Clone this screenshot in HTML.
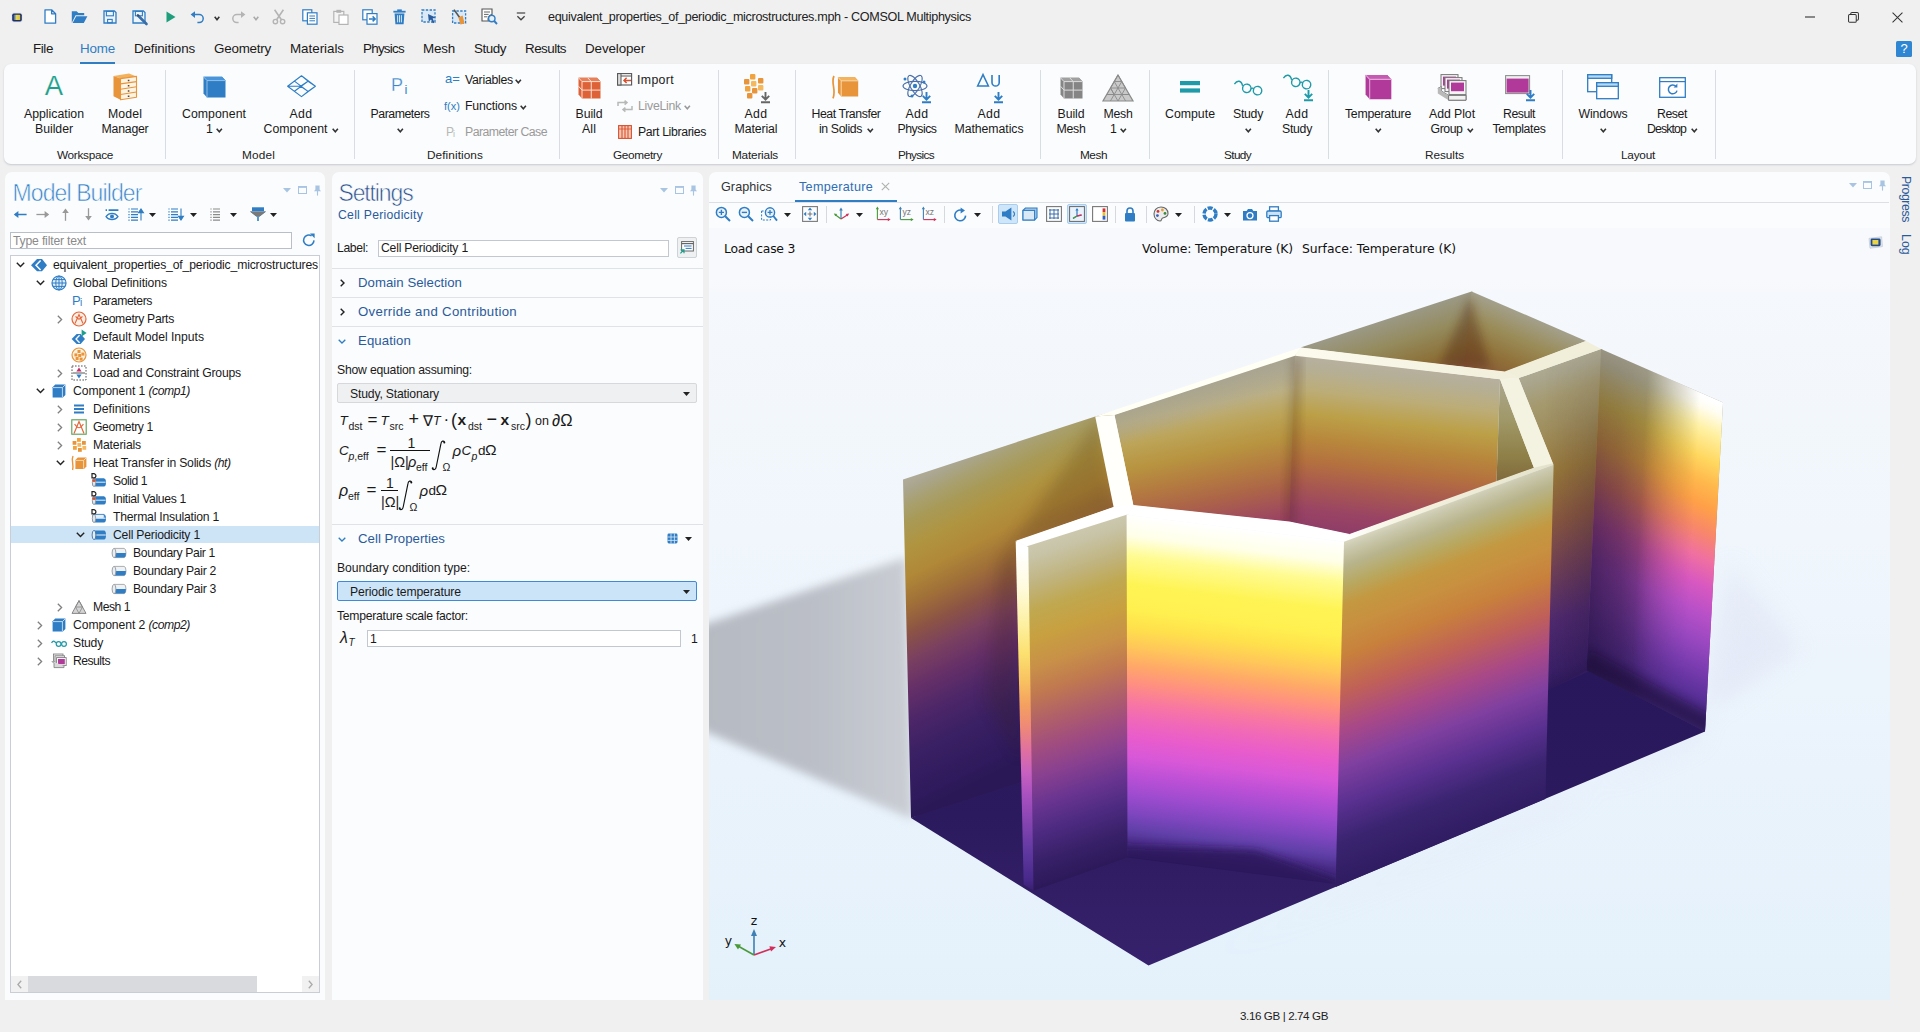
<!DOCTYPE html>
<html lang="en"><head><meta charset="utf-8"><title>COMSOL Multiphysics</title>
<style>
*{box-sizing:border-box;margin:0;padding:0}
html,body{width:1920px;height:1032px;overflow:hidden;background:#f0f0f0}
body{font-family:"Liberation Sans",sans-serif;font-size:12px;color:#1a1a1a;position:relative}
.abs{position:absolute}
.t{position:absolute;white-space:nowrap;line-height:16px;height:16px}
.c{transform:translateX(-50%);text-align:center}
svg{position:absolute;overflow:visible}
#ribbon{position:absolute;left:4px;top:64px;width:1912px;height:100px;background:#fafcfd;border-radius:7px;box-shadow:0 1px 2px rgba(120,130,150,.35)}
.sep{position:absolute;top:70px;width:1px;height:89px;background:#d9dde3}
.rl{font-size:12.3px;letter-spacing:-.1px}
.gl{font-size:11.8px;color:#222}
.menu{font-size:13.4px}
.panel{position:absolute;background:#fafcfd;border-radius:7px 7px 0 0}
.ptitle{font-size:23px;color:#3583c9;line-height:26px;height:26px;-webkit-text-stroke:.6px #fafcfd}
.tree{position:absolute;left:10px;top:255px;width:310px;height:738px;background:#fff;border:1px solid #c9ced6}
.tr{font-size:12.2px;letter-spacing:-.12px}
.sec{font-size:13.2px;color:#2b5a9b;letter-spacing:-.05px}
.hline{position:absolute;left:332px;width:371px;height:1px;background:#dfe3e8}
.lab{font-size:12.2px;letter-spacing:-.12px}
.inp{position:absolute;background:#fff;border:1px solid #c3c8d0}
.math{font-family:"Liberation Serif",serif;font-size:16px;color:#111}
.gtxt{font-family:"DejaVu Sans",sans-serif;font-size:12.4px;color:#111}
</style></head><body>
<svg style="left:11px;top:11.5px" width="12" height="11" viewBox="0 0 12 11"><defs><linearGradient id="apg" x1="0" y1="0" x2="1" y2="0"><stop offset="0" stop-color="#2d58b0"/><stop offset=".45" stop-color="#e6d85a"/><stop offset="1" stop-color="#d9c23a"/></linearGradient></defs><rect x=".4" y=".4" width="11.2" height="10.2" rx="2.4" fill="#dfe3ea"/><rect x="1.2" y="1.6" width="9.6" height="7.8" rx="1.6" fill="#1f2f66"/><rect x="2.6" y="2.8" width="6.6" height="5.2" rx=".6" fill="url(#apg)"/></svg>
<svg style="left:44px;top:9px" width="13" height="15" viewBox="0 0 13 15"><path d="M1 .8H7.6L11.6 4.8V14.2H1Z M7.6 .8V4.8H11.6" fill="#fff" stroke="#2f7dc4" stroke-width="1.3" stroke-linejoin="round"/></svg>
<svg style="left:71px;top:10px" width="17" height="14" viewBox="0 0 17 14"><path d="M.8 12.8V1.2H5.6L7.4 3H13.2V5.2H4.6L.8 12.8Z" fill="#2f7dc4"/><path d="M1.6 13L5.2 6.2H16.4L12.8 13Z" fill="#2f7dc4"/></svg>
<svg style="left:103px;top:10px" width="14" height="14" viewBox="0 0 14 14"><path d="M1 1H11.4L13 2.6V13H1Z" fill="#eef4fb" stroke="#2f7dc4" stroke-width="1.3"/><rect x="3.4" y="1.4" width="7" height="4.4" fill="none" stroke="#2f7dc4" stroke-width="1.1"/><rect x="4.6" y="9.4" width="4.6" height="3.4" fill="none" stroke="#2f7dc4" stroke-width="1.1"/></svg>
<svg style="left:132px;top:10px" width="16" height="15" viewBox="0 0 16 15"><path d="M1 1H11.4L13 2.6V13H1Z" fill="#eef4fb" stroke="#2f7dc4" stroke-width="1.3"/><rect x="3.4" y="1.4" width="7" height="4.4" fill="none" stroke="#2f7dc4" stroke-width="1.1"/><path d="M6 5.5L14.5 14" stroke="#3a6ea8" stroke-width="2.6" stroke-linecap="round"/><path d="M4.8 4.2L7.4 5.4L6 6.8Z" fill="#444"/></svg>
<svg style="left:166px;top:11px" width="10" height="12" viewBox="0 0 10 12"><path d="M.5 .5L9.5 6L.5 11.5Z" fill="#1f9e7c"/></svg>
<svg style="left:190px;top:10px" width="15" height="14" viewBox="0 0 15 14"><path d="M3 4.6H9.2A4 4 0 0 1 9.2 12.6H7.4" fill="none" stroke="#2f7dc4" stroke-width="1.5"/><path d="M.6 4.6L5 1.2V8Z" fill="#2f7dc4"/></svg>
<svg style="left:214.0px;top:16px" width="6" height="5" viewBox="0 0 6 5"><path d="M0.7 0.7 L3.0 3.8 L5.3 0.7" fill="none" stroke="#333" stroke-width="1.55"/></svg>
<svg style="left:231px;top:10px" width="15" height="14" viewBox="0 0 15 14"><path d="M12 4.6H5.8A4 4 0 0 0 5.8 12.6H7.6" fill="none" stroke="#b4b4b4" stroke-width="1.5"/><path d="M14.4 4.6L10 1.2V8Z" fill="#b4b4b4"/></svg>
<svg style="left:253.0px;top:16px" width="6" height="5" viewBox="0 0 6 5"><path d="M0.7 0.7 L3.0 3.8 L5.3 0.7" fill="none" stroke="#aaa" stroke-width="1.55"/></svg>
<svg style="left:272px;top:9px" width="14" height="16" viewBox="0 0 14 16"><path d="M2.6 .8L9.6 11 M11.4 .8L4.4 11" stroke="#b4b4b4" stroke-width="1.6" fill="none"/><circle cx="3.4" cy="12.6" r="2.2" fill="none" stroke="#b4b4b4" stroke-width="1.4"/><circle cx="10.6" cy="12.6" r="2.2" fill="none" stroke="#b4b4b4" stroke-width="1.4"/></svg>
<svg style="left:302px;top:9px" width="16" height="16" viewBox="0 0 16 16"><rect x=".8" y=".8" width="9" height="11" fill="#fff" stroke="#2f7dc4" stroke-width="1.2"/><rect x="5.4" y="3.8" width="9.6" height="11.4" fill="#fff" stroke="#2f7dc4" stroke-width="1.2"/><path d="M7.4 7H13M7.4 9.4H13M7.4 11.8H13" stroke="#2f7dc4" stroke-width="1"/></svg>
<svg style="left:333px;top:9px" width="16" height="16" viewBox="0 0 16 16"><rect x=".8" y="2.4" width="10" height="11" fill="#f4f4f4" stroke="#b4b4b4" stroke-width="1.2"/><rect x="3.4" y=".8" width="4.8" height="3" fill="#b4b4b4"/><rect x="6" y="6" width="9" height="9.4" fill="#fff" stroke="#b4b4b4" stroke-width="1.2"/></svg>
<svg style="left:362px;top:9px" width="16" height="16" viewBox="0 0 16 16"><rect x=".8" y=".8" width="9.4" height="10" fill="#fff" stroke="#2f7dc4" stroke-width="1.2"/><rect x="5" y="4.6" width="10" height="10.6" fill="#fff" stroke="#2f7dc4" stroke-width="1.2"/><path d="M7 9.9H13M10.6 7.4L13.2 9.9L10.6 12.4" stroke="#2f7dc4" stroke-width="1.5" fill="none"/></svg>
<svg style="left:393px;top:9px" width="13" height="16" viewBox="0 0 13 16"><path d="M1.6 4.4H11.4L10.6 15.2H2.4Z" fill="#2f7dc4"/><rect x=".4" y="1.8" width="12.2" height="1.8" fill="#2f7dc4"/><rect x="4.2" y=".4" width="4.6" height="1.6" fill="#2f7dc4"/><path d="M4.6 6.2V13.4M6.5 6.2V13.4M8.4 6.2V13.4" stroke="#e9f1fa" stroke-width=".9"/></svg>
<svg style="left:421px;top:9px" width="17" height="16" viewBox="0 0 17 16"><rect x="1" y="1" width="13" height="12" fill="#dbe9f7" stroke="#2f7dc4" stroke-width="1.3" stroke-dasharray="2.4 1.4"/><path d="M7 5L14.6 8.4L11.6 9.6L13.6 13.4L12 14.2L10 10.4L7.8 12.6Z" fill="#2a5d9e"/></svg>
<svg style="left:451px;top:9px" width="17" height="16" viewBox="0 0 17 16"><rect x="1.6" y="2" width="13" height="12" fill="#dbe9f7" stroke="#2f7dc4" stroke-width="1.3" stroke-dasharray="2.4 1.4"/><path d="M3 .6L9 9" stroke="#555" stroke-width="1.6"/><path d="M7.4 8.4L11.6 6.6L13.6 14.6L9.4 15.4Z" fill="#e8953a"/></svg>
<svg style="left:481px;top:8px" width="17" height="18" viewBox="0 0 17 18"><path d="M1 1H11V6.6A4.6 4.6 0 0 0 7.4 13H1Z" fill="#fff" stroke="#555" stroke-width="1.1"/><path d="M3 4H9M3 6.4H7.6M3 8.8H6.4" stroke="#666" stroke-width="1"/><circle cx="10.8" cy="10.6" r="3.2" fill="#e6f0fb" stroke="#2f7dc4" stroke-width="1.4"/><path d="M13.2 13L16 16" stroke="#2f7dc4" stroke-width="1.9"/></svg>
<svg style="left:516px;top:12px" width="10" height="10" viewBox="0 0 10 10"><path d="M.8 1H9.2" stroke="#444" stroke-width="1.2"/><path d="M1.4 4.2L5 7.8L8.6 4.2" fill="none" stroke="#444" stroke-width="1.3"/></svg>
<div id="t1" class="t " style="left:548px;top:9px;letter-spacing:-0.327px;font-size:12.6px;color:#222;">equivalent_properties_of_periodic_microstructures.mph - COMSOL Multiphysics</div>
<svg style="left:1805px;top:16px" width="10" height="2" viewBox="0 0 10 2"><path d="M0 1H10" stroke="#333" stroke-width="1.1"/></svg>
<svg style="left:1848px;top:11.5px" width="11" height="11" viewBox="0 0 12 12"><rect x=".6" y="2.8" width="8.4" height="8.4" rx="1.2" fill="none" stroke="#333" stroke-width="1.1"/><path d="M3 2.8V2A1.4 1.4 0 0 1 4.4 .6H10A1.4 1.4 0 0 1 11.4 2V7.6A1.4 1.4 0 0 1 10 9H9" fill="none" stroke="#333" stroke-width="1.1"/></svg>
<svg style="left:1892px;top:11.5px" width="11" height="11" viewBox="0 0 12 12"><path d="M.6 .6L11.4 11.4M11.4 .6L.6 11.4" stroke="#333" stroke-width="1.1"/></svg>
<div class="abs" style="left:1896px;top:41px;width:16px;height:16px;background:#2f86d2;border-radius:1.5px"></div><div class="t c" style="left:1904px;top:41px;color:#fff;font-size:13px;line-height:16px">?</div>
<div id="t2" class="t menu" style="left:33px;top:41px;letter-spacing:-0.395px;">File</div>
<div id="t3" class="t menu" style="left:80px;top:41px;letter-spacing:-0.184px;color:#2f7dc4;">Home</div>
<div id="t4" class="t menu" style="left:134px;top:41px;letter-spacing:-0.139px;">Definitions</div>
<div id="t5" class="t menu" style="left:214px;top:41px;letter-spacing:-0.225px;">Geometry</div>
<div id="t6" class="t menu" style="left:290px;top:41px;letter-spacing:-0.036px;">Materials</div>
<div id="t7" class="t menu" style="left:363px;top:41px;letter-spacing:-0.734px;">Physics</div>
<div id="t8" class="t menu" style="left:423px;top:41px;letter-spacing:-0.188px;">Mesh</div>
<div id="t9" class="t menu" style="left:474px;top:41px;letter-spacing:-0.450px;">Study</div>
<div id="t10" class="t menu" style="left:525px;top:41px;letter-spacing:-0.522px;">Results</div>
<div id="t11" class="t menu" style="left:585px;top:41px;letter-spacing:-0.116px;">Developer</div>
<div class="abs" style="left:80px;top:62px;width:35px;height:2px;background:#2f7dc4"></div>
<div id="ribbon"></div>
<div class="sep" style="left:165px"></div>
<div class="sep" style="left:354px"></div>
<div class="sep" style="left:559px"></div>
<div class="sep" style="left:718px"></div>
<div class="sep" style="left:795px"></div>
<div class="sep" style="left:1040px"></div>
<div class="sep" style="left:1149px"></div>
<div class="sep" style="left:1328px"></div>
<div class="sep" style="left:1562px"></div>
<div class="sep" style="left:1715px"></div>
<div id="t12" class="t c " style="left:54px;top:79px;font-size:27.5px;line-height:30px;height:30px;top:70.6px;color:#1fa08c;-webkit-text-stroke:.2px #fafcfd;">A</div>
<div id="t13" class="t c rl" style="left:54px;top:106px;letter-spacing:-0.015px;">Application</div>
<div id="t14" class="t c rl" style="left:54px;top:121px;letter-spacing:-0.040px;">Builder</div>
<svg style="left:112.5px;top:73.0px" width="24" height="28" viewBox="0 0 24 28"><path d="M.5 3L16 .6L23.5 3.4L7.5 5.6Z" fill="#f3b25c"/><path d="M.5 3L7.5 5.6V26.8L.5 23.2Z" fill="#e8943a"/><path d="M7.5 5.6L23.5 3.4V24.2L7.5 26.8Z" fill="#fdf4e4" stroke="#e8943a" stroke-width="1.1" stroke-linejoin="round"/><path d="M7.5 10.9L23.5 8.6M7.5 16.2L23.5 13.8M7.5 21.5L23.5 19" stroke="#e8943a" stroke-width="1.1"/><path d="M14.8 7.5h1.6M14.8 12.8h1.6M14.8 18h1.6M14.8 23.2h1.6" stroke="#5a4630" stroke-width="1.5"/></svg>
<div id="t15" class="t c rl" style="left:125px;top:106px;letter-spacing:0.100px;">Model</div>
<div id="t16" class="t c rl" style="left:125px;top:121px;letter-spacing:-0.221px;">Manager</div>
<svg style="left:202.5px;top:75.5px" width="23" height="22" viewBox="0 0 23 22"><path d="M.5 .8H19L22.5 4.6V21.6H4L.5 17.6Z" fill="#2f7dc4"/><path d="M.5 .8H19L22.5 4.6H4Z" fill="#4a94da"/><path d="M.5 .8L4 4.6V21.6M4 4.6H22.5" fill="none" stroke="#9cc6ee" stroke-width=".9"/></svg>
<div id="t17" class="t c rl" style="left:214px;top:106px;letter-spacing:0.046px;">Component</div>
<div id="t18" class="t rl" style="left:206.0px;top:121px;">1</div>
<svg style="left:215.5px;top:127.6px" width="6.6" height="5" viewBox="0 0 6.6 5"><path d="M0.7 0.7 L3.3 3.8 L5.8999999999999995 0.7" fill="none" stroke="#333" stroke-width="1.55"/></svg>
<svg style="left:286.5px;top:75.3px" width="29" height="22.4" viewBox="0 0 29 22.4"><path d="M14.5 .8L.6 11.2L14.5 21.6L28.4 11.2Z M14.5 .8L21 6.2M14.5 21.6L21 16.4M.6 11.2L13.6 11.2 M21 6.2L13.6 11.2L21 16.4L28.4 11.2Z M7.4 6.1L21 16.4M7.4 16.3L21 6.2" fill="none" stroke="#2f7dc4" stroke-width="1.1" stroke-linejoin="round"/></svg>
<div id="t19" class="t c rl" style="left:301px;top:106px;letter-spacing:0.369px;">Add</div>
<div id="t20" class="t rl" style="left:263.5px;top:121px;letter-spacing:0.046px;">Component</div>
<svg style="left:332.0px;top:127.6px" width="6.6" height="5" viewBox="0 0 6.6 5"><path d="M0.7 0.7 L3.3 3.8 L5.8999999999999995 0.7" fill="none" stroke="#333" stroke-width="1.55"/></svg>
<div id="t21" class="t c " style="left:397px;top:78px;font-size:18px;line-height:20px;height:20px;top:74.6px;color:#3a87cc;-webkit-text-stroke:.3px #fafcfd;">P</div>
<div id="t22" class="t c " style="left:406px;top:82px;font-size:13px;line-height:14px;height:14px;top:82.6px;color:#3a87cc;">i</div>
<div id="t23" class="t c rl" style="left:400px;top:106px;letter-spacing:-0.456px;">Parameters</div>
<svg style="left:396.7px;top:127.6px" width="6.6" height="5" viewBox="0 0 6.6 5"><path d="M0.7 0.7 L3.3 3.8 L5.8999999999999995 0.7" fill="none" stroke="#333" stroke-width="1.55"/></svg>
<div id="t24" class="t " style="left:445px;top:71px;font-size:13px;color:#2f7dc4;font-weight:400">a=</div>
<div id="t25" class="t rl" style="left:465px;top:72px;letter-spacing:-0.261px;">Variables</div>
<svg style="left:514.7px;top:78.6px" width="6.6" height="5" viewBox="0 0 6.6 5"><path d="M0.7 0.7 L3.3 3.8 L5.8999999999999995 0.7" fill="none" stroke="#333" stroke-width="1.55"/></svg>
<div id="t26" class="t " style="left:444px;top:97.5px;font-size:11px;color:#2f7dc4;">f(x)</div>
<div id="t27" class="t rl" style="left:465px;top:98px;letter-spacing:-0.147px;">Functions</div>
<svg style="left:519.7px;top:104.6px" width="6.6" height="5" viewBox="0 0 6.6 5"><path d="M0.7 0.7 L3.3 3.8 L5.8999999999999995 0.7" fill="none" stroke="#333" stroke-width="1.55"/></svg>
<div id="t28" class="t " style="left:446px;top:124px;font-size:12px;color:#b8b8b8;">P</div>
<div id="t29" class="t " style="left:453px;top:126px;font-size:9px;color:#b8b8b8;">i</div>
<div id="t30" class="t rl" style="left:465px;top:124px;letter-spacing:-0.539px;color:#9a9a9a;">Parameter Case</div>
<svg style="left:577.5px;top:76.5px" width="23" height="22" viewBox="0 0 23 22"><path d="M.5 .8H19L22.5 4.6V21.6H4L.5 17.6Z" fill="#dd6238"/><path d="M.5 .8H19L22.5 4.6H4Z" fill="#e8805a"/><path d="M.5 .8L4 4.6V21.6M4 4.6H22.5M13.25 4.6V21.6M4 13.1H22.5M9.75 .8L13.25 4.6M.5 9.2L4 13.1" fill="none" stroke="#fbe0d4" stroke-width="1"/></svg>
<div id="t31" class="t c rl" style="left:589px;top:106px;letter-spacing:-0.072px;">Build</div>
<div id="t32" class="t c rl" style="left:589px;top:121px;letter-spacing:0.108px;">All</div>
<svg style="left:617px;top:73px" width="16" height="13" viewBox="0 0 16 13"><rect x=".6" y=".6" width="14" height="11.4" fill="#fff" stroke="#555" stroke-width="1.1"/><path d="M.6 3H14.6" stroke="#555" stroke-width="1"/><path d="M14 7.4H7M9.6 4.8L7 7.4L9.6 10" stroke="#d9502f" stroke-width="1.5" fill="none"/><rect x=".6" y=".6" width="3.4" height="11.4" fill="#ddd" stroke="#555" stroke-width="1"/></svg>
<div id="t33" class="t rl" style="left:637px;top:72px;letter-spacing:0.358px;">Import</div>
<svg style="left:617px;top:100px" width="16" height="12" viewBox="0 0 16 12"><path d="M1 6V2.6H10M7.6 .6L10 2.6L7.6 4.6M15 6V9.6H6M8.4 7.6L6 9.6L8.4 11.6" fill="none" stroke="#b8b8b8" stroke-width="1.5"/></svg>
<div id="t34" class="t rl" style="left:638px;top:98px;letter-spacing:-0.266px;color:#9a9a9a;">LiveLink</div>
<svg style="left:683.7px;top:104.6px" width="6.6" height="5" viewBox="0 0 6.6 5"><path d="M0.7 0.7 L3.3 3.8 L5.8999999999999995 0.7" fill="none" stroke="#999" stroke-width="1.55"/></svg>
<svg style="left:618px;top:125px" width="14" height="14" viewBox="0 0 14 14"><rect x=".6" y=".6" width="12.8" height="12.8" fill="#f7c9b5" stroke="#d9502f" stroke-width="1.1"/><path d="M4 1V13M7 1V13M10 1V13" stroke="#d9502f" stroke-width="1.1"/><path d="M1 4H13" stroke="#d9502f" stroke-width=".8"/></svg>
<div id="t35" class="t rl" style="left:638px;top:124px;letter-spacing:-0.367px;">Part Libraries</div>
<svg style="left:743.0px;top:74.0px" width="28" height="30" viewBox="0 0 28 30"><rect x="7" y="0" width="5.4" height="5.4" rx="1" fill="#f0a33f"/><rect x="1" y="5" width="5.4" height="5.4" rx="1" fill="#e8943a"/><rect x="8" y="7" width="5.4" height="5.4" rx="1" fill="#f5b85c"/><rect x="15" y="4" width="5.4" height="5.4" rx="1" fill="#e8943a"/><rect x="2" y="12" width="5.4" height="5.4" rx="1" fill="#f0a33f"/><rect x="9" y="14" width="5.4" height="5.4" rx="1" fill="#e8943a"/><rect x="15" y="11" width="5.4" height="5.4" rx="1" fill="#f5b85c"/><rect x="4" y="19" width="5.4" height="5.4" rx="1" fill="#e8943a"/><path d="M22.5 18V25M18.8 21.8L22.5 25.6L26.2 21.8M18 28.2H27" fill="none" stroke="#666" stroke-width="1.9"/></svg>
<div id="t36" class="t c rl" style="left:756px;top:106px;letter-spacing:0.369px;">Add</div>
<div id="t37" class="t c rl" style="left:756px;top:121px;letter-spacing:-0.092px;">Material</div>
<svg style="left:831.0px;top:74.5px" width="28" height="24" viewBox="0 0 28 24"><path d="M3 1C-.5 8 5.5 14 2 23.4" fill="none" stroke="#e8943a" stroke-width="1.7"/><g transform="translate(6.5,1.6) scale(.92)"><path d="M.5 .8H19L22.5 4.6V21.6H4L.5 17.6Z" fill="#e8943a"/><path d="M.5 .8H19L22.5 4.6H4Z" fill="#f3b25c"/><path d="M.5 .8L4 4.6V21.6M4 4.6H22.5" fill="none" stroke="#fbe0b8" stroke-width="1"/></g></svg>
<div id="t38" class="t c rl" style="left:846px;top:106px;letter-spacing:-0.423px;">Heat Transfer</div>
<div id="t39" class="t rl" style="left:819.0px;top:121px;letter-spacing:-0.388px;">in Solids</div>
<svg style="left:866.5px;top:127.6px" width="6.6" height="5" viewBox="0 0 6.6 5"><path d="M0.7 0.7 L3.3 3.8 L5.8999999999999995 0.7" fill="none" stroke="#333" stroke-width="1.55"/></svg>
<svg style="left:902.0px;top:72.0px" width="30" height="32" viewBox="0 0 30 32"><g fill="none" stroke="#4a6fa8" stroke-width="1.1"><ellipse cx="13" cy="14" rx="12" ry="4.6"/><ellipse cx="13" cy="14" rx="12" ry="4.6" transform="rotate(60 13 14)"/><ellipse cx="13" cy="14" rx="12" ry="4.6" transform="rotate(120 13 14)"/></g><circle cx="13" cy="14" r="2.2" fill="#2f7dc4"/><circle cx="3" cy="7" r="1.5" fill="#2f7dc4"/><circle cx="22" cy="10" r="1.5" fill="#2f7dc4"/><circle cx="10" cy="24" r="1.5" fill="#2f7dc4"/><path d="M24.5 20V27M20.8 23.8L24.5 27.6L28.2 23.8M20 30.2H29" fill="none" stroke="#2f7dc4" stroke-width="1.9"/></svg>
<div id="t40" class="t c rl" style="left:917px;top:106px;letter-spacing:0.369px;">Add</div>
<div id="t41" class="t c rl" style="left:917px;top:121px;letter-spacing:-0.482px;">Physics</div>
<svg style="left:976.0px;top:73.0px" width="28" height="30" viewBox="0 0 28 30"><path d="M1.6 13L7 1.6L12.4 13Z" fill="none" stroke="#2f7dc4" stroke-width="1.5"/><path d="M16 2V9.4A3.6 3.6 0 0 0 23.2 9.4V2" fill="none" stroke="#2f7dc4" stroke-width="1.6"/><path d="M22.5 19V26M18.8 22.8L22.5 26.6L26.2 22.8M18 29.2H27" fill="none" stroke="#2f7dc4" stroke-width="1.9"/></svg>
<div id="t42" class="t c rl" style="left:989px;top:106px;letter-spacing:0.369px;">Add</div>
<div id="t43" class="t c rl" style="left:989px;top:121px;letter-spacing:-0.064px;">Mathematics</div>
<svg style="left:1059.5px;top:76.5px" width="23" height="22" viewBox="0 0 23 22"><path d="M.5 .8H19L22.5 4.6V21.6H4L.5 17.6Z" fill="#858585"/><path d="M.5 .8H19L22.5 4.6H4Z" fill="#a0a0a0"/><path d="M.5 .8L4 4.6V21.6M4 4.6H22.5M13.25 4.6V21.6M4 13.1H22.5M9.75 .8L13.25 4.6M.5 9.2L4 13.1" fill="none" stroke="#dcdcdc" stroke-width="1"/></svg>
<div id="t44" class="t c rl" style="left:1071px;top:106px;letter-spacing:-0.072px;">Build</div>
<div id="t45" class="t c rl" style="left:1071px;top:121px;letter-spacing:-0.268px;">Mesh</div>
<svg style="left:1102.0px;top:74.0px" width="32" height="28" viewBox="0 0 32 28"><path d="M16 1L31 27H1Z" fill="#c9c9c9" stroke="#8a8a8a" stroke-width="1.2"/><path d="M8.5 14H23.5M4.8 20.5H27.2M12.2 7.5H19.8M16 1L8.5 14L12.2 20.5L4.8 20.5M16 1L23.5 14L19.8 20.5L27.2 20.5M12.2 7.5L19.8 20.5L16 27L12.2 20.5L19.8 7.5M8.5 14L12.2 20.5M8.4 27L12.2 20.5M23.6 27L19.8 20.5" fill="none" stroke="#8a8a8a" stroke-width=".9"/></svg>
<div id="t46" class="t c rl" style="left:1118px;top:106px;letter-spacing:-0.268px;">Mesh</div>
<div id="t47" class="t rl" style="left:1110.0px;top:121px;">1</div>
<svg style="left:1119.5px;top:127.6px" width="6.6" height="5" viewBox="0 0 6.6 5"><path d="M0.7 0.7 L3.3 3.8 L5.8999999999999995 0.7" fill="none" stroke="#333" stroke-width="1.55"/></svg>
<svg style="left:1180.0px;top:81.0px" width="20" height="12" viewBox="0 0 20 12"><rect x="0" y="0" width="20" height="4.2" fill="#1f9aa8"/><rect x="0" y="7.4" width="20" height="4.2" fill="#1f9aa8"/></svg>
<div id="t48" class="t c rl" style="left:1190px;top:106px;letter-spacing:0.014px;">Compute</div>
<svg style="left:1233.0px;top:80.5px" width="30" height="13" viewBox="0 0 30 13"><g transform="rotate(12 15 6.5)"><path d="M1 6C3 1 7 1 9.4 6" fill="none" stroke="#1f9aa8" stroke-width="1.4"/><circle cx="14" cy="7.6" r="4.2" fill="none" stroke="#1f9aa8" stroke-width="1.4"/><circle cx="25" cy="7.6" r="4.2" fill="none" stroke="#1f9aa8" stroke-width="1.4"/><path d="M18.2 7C19.4 5.8 20 5.8 20.8 7" fill="none" stroke="#1f9aa8" stroke-width="1.3"/></g></svg>
<div id="t49" class="t c rl" style="left:1248px;top:106px;letter-spacing:-0.291px;">Study</div>
<svg style="left:1244.7px;top:127.6px" width="6.6" height="5" viewBox="0 0 6.6 5"><path d="M0.7 0.7 L3.3 3.8 L5.8999999999999995 0.7" fill="none" stroke="#333" stroke-width="1.55"/></svg>
<svg style="left:1282px;top:75px" width="32" height="28" viewBox="0 0 32 28"><g transform="rotate(12 15 6.5)"><path d="M1 6C3 1 7 1 9.4 6" fill="none" stroke="#1f9aa8" stroke-width="1.4"/><circle cx="14" cy="7.6" r="4.2" fill="none" stroke="#1f9aa8" stroke-width="1.4"/><circle cx="25" cy="7.6" r="4.2" fill="none" stroke="#1f9aa8" stroke-width="1.4"/><path d="M18.2 7C19.4 5.8 20 5.8 20.8 7" fill="none" stroke="#1f9aa8" stroke-width="1.3"/></g><path d="M26.5 15V22M22.8 18.8L26.5 22.6L30.2 18.8M22 25.2H31" fill="none" stroke="#1f9aa8" stroke-width="1.9"/></svg>
<div id="t50" class="t c rl" style="left:1297px;top:106px;letter-spacing:0.369px;">Add</div>
<div id="t51" class="t c rl" style="left:1297px;top:121px;letter-spacing:-0.291px;">Study</div>
<svg style="left:1364.5px;top:74.3px" width="27" height="25.4" viewBox="0 0 27 25.4"><g transform="scale(1.17)"><path d="M.5 .8H19L22.5 4.6V21.6H4L.5 17.6Z" fill="#b0399a"/><path d="M.5 .8H19L22.5 4.6H4Z" fill="#c659b2"/><path d="M.5 .8L4 4.6V21.6M4 4.6H22.5" fill="none" stroke="#e3a6d8" stroke-width=".9"/></g></svg>
<div id="t52" class="t c rl" style="left:1378px;top:106px;letter-spacing:-0.276px;">Temperature</div>
<svg style="left:1374.7px;top:127.6px" width="6.6" height="5" viewBox="0 0 6.6 5"><path d="M0.7 0.7 L3.3 3.8 L5.8999999999999995 0.7" fill="none" stroke="#333" stroke-width="1.55"/></svg>
<svg style="left:1437.0px;top:73.5px" width="30" height="27" viewBox="0 0 30 27"><rect x="4" y=".6" width="17" height="14" fill="#f4f4f4" stroke="#777" stroke-width="1"/><rect x="6" y="2.6" width="13" height="9" fill="#b0399a"/><rect x="8" y="3.6" width="17" height="14" fill="#f4f4f4" stroke="#777" stroke-width="1"/><rect x="10" y="5.6" width="13" height="9" fill="#b0399a"/><rect x="12" y="6.6" width="17" height="14" fill="#f4f4f4" stroke="#777" stroke-width="1"/><rect x="14" y="8.6" width="13" height="8.6" fill="#b0399a"/><path d="M.8 14.4L4.4 12.6V17L11.6 21.4V26.2H29V21" fill="none" stroke="#777" stroke-width="1"/><path d="M.8 14.4L4.4 12.6V17L11.6 21.4V26.2L.8 19.4Z" fill="#b9b9b9"/><path d="M11.6 21.4H29V26.2H11.6Z" fill="#f2f2f2" stroke="#777" stroke-width="1"/></svg>
<div id="t53" class="t c rl" style="left:1452px;top:106px;letter-spacing:-0.061px;">Add Plot</div>
<div id="t54" class="t rl" style="left:1430.5px;top:121px;letter-spacing:-0.438px;">Group</div>
<svg style="left:1467.0px;top:127.6px" width="6.6" height="5" viewBox="0 0 6.6 5"><path d="M0.7 0.7 L3.3 3.8 L5.8999999999999995 0.7" fill="none" stroke="#333" stroke-width="1.55"/></svg>
<svg style="left:1505.0px;top:75.0px" width="30" height="26" viewBox="0 0 30 26"><rect x=".6" y=".6" width="24" height="18" fill="#eee" stroke="#888" stroke-width="1"/><rect x="1.6" y="3.6" width="22" height="14" fill="#b0399a"/><path d="M25.5 15V22M21.8 18.8L25.5 22.6L29.2 18.8M21 25.2H30" fill="none" stroke="#2f7dc4" stroke-width="1.9"/></svg>
<div id="t55" class="t c rl" style="left:1519px;top:106px;letter-spacing:-0.478px;">Result</div>
<div id="t56" class="t c rl" style="left:1519px;top:121px;letter-spacing:-0.340px;">Templates</div>
<svg style="left:1587.0px;top:74.0px" width="32" height="26" viewBox="0 0 32 26"><rect x=".7" y=".7" width="24" height="17" fill="#fff" stroke="#2f7dc4" stroke-width="1.3"/><rect x=".7" y=".7" width="24" height="3.6" fill="#b5daf6" stroke="#2f7dc4" stroke-width="1.3"/><rect x="9.7" y="8.7" width="21.6" height="16" fill="#fff" stroke="#2f7dc4" stroke-width="1.3"/><rect x="9.7" y="8.7" width="21.6" height="3.6" fill="#b5daf6" stroke="#2f7dc4" stroke-width="1.3"/></svg>
<div id="t57" class="t c rl" style="left:1603px;top:106px;letter-spacing:-0.127px;">Windows</div>
<svg style="left:1599.7px;top:127.6px" width="6.6" height="5" viewBox="0 0 6.6 5"><path d="M0.7 0.7 L3.3 3.8 L5.8999999999999995 0.7" fill="none" stroke="#333" stroke-width="1.55"/></svg>
<svg style="left:1658.5px;top:76.5px" width="27" height="21" viewBox="0 0 27 21"><rect x=".7" y=".7" width="25.6" height="19.6" fill="#fff" stroke="#2f7dc4" stroke-width="1.3"/><path d="M.7 4.6H26.3" stroke="#2f7dc4" stroke-width="1.2"/><path d="M17 9.4A4.4 4.4 0 1 0 18 13.6" fill="none" stroke="#2f7dc4" stroke-width="1.5"/><path d="M18.4 6.6V10.4H14.6Z" fill="#2f7dc4"/></svg>
<div id="t58" class="t c rl" style="left:1672px;top:106px;letter-spacing:-0.425px;">Reset</div>
<div id="t59" class="t rl" style="left:1647.0px;top:121px;letter-spacing:-0.875px;">Desktop</div>
<svg style="left:1690.5px;top:127.6px" width="6.6" height="5" viewBox="0 0 6.6 5"><path d="M0.7 0.7 L3.3 3.8 L5.8999999999999995 0.7" fill="none" stroke="#333" stroke-width="1.55"/></svg>
<div id="t60" class="t gl" style="left:57px;top:147px;letter-spacing:-0.311px;">Workspace</div>
<div id="t61" class="t gl" style="left:242px;top:147px;letter-spacing:0.172px;">Model</div>
<div id="t62" class="t gl" style="left:427px;top:147px;letter-spacing:0.082px;">Definitions</div>
<div id="t63" class="t gl" style="left:613px;top:147px;letter-spacing:-0.350px;">Geometry</div>
<div id="t64" class="t gl" style="left:732px;top:147px;letter-spacing:-0.207px;">Materials</div>
<div id="t65" class="t gl" style="left:898px;top:147px;letter-spacing:-0.665px;">Physics</div>
<div id="t66" class="t gl" style="left:1080px;top:147px;letter-spacing:-0.465px;">Mesh</div>
<div id="t67" class="t gl" style="left:1224px;top:147px;letter-spacing:-0.634px;">Study</div>
<div id="t68" class="t gl" style="left:1425px;top:147px;letter-spacing:-0.049px;">Results</div>
<div id="t69" class="t gl" style="left:1621px;top:147px;letter-spacing:-0.237px;">Layout</div>
<div class="panel" style="left:5px;top:172px;width:320px;height:828px"></div>
<div id="t70" class="t ptitle" style="left:12.5px;top:183px;letter-spacing:-0.895px;top:179.5px;">Model Builder</div>
<svg style="left:283px;top:188px" width="8" height="5" viewBox="0 0 8 5"><path d="M0 0H8L4 4.6Z" fill="#a9c4e2"/></svg>
<svg style="left:297.5px;top:186px" width="9" height="8" viewBox="0 0 9 8"><rect x=".5" y=".5" width="8" height="7" fill="none" stroke="#a9c4e2" stroke-width="1"/><path d="M.5 1.2H8.5" stroke="#a9c4e2" stroke-width="1.4"/></svg>
<svg style="left:313.5px;top:185px" width="7" height="11" viewBox="0 0 7 11"><path d="M1.4 .4H5.6V4.6L7 6.2H0L1.4 4.6Z" fill="#a9c4e2"/><path d="M3.5 6V10.6" stroke="#a9c4e2" stroke-width="1.1"/></svg>
<svg style="left:13px;top:210.0px" width="14" height="9" viewBox="0 0 14 9"><path d="M13.6 4.5H2" stroke="#2f7dc4" stroke-width="1.5"/><path d="M5.4 1L.8 4.5L5.4 8Z" fill="#2f7dc4"/></svg>
<svg style="left:36px;top:210.0px" width="14" height="9" viewBox="0 0 14 9"><path d="M.4 4.5H12" stroke="#999" stroke-width="1.3"/><path d="M8.6 1L13.2 4.5L8.6 8Z" fill="#999"/></svg>
<svg style="left:61px;top:208.0px" width="9" height="13" viewBox="0 0 9 13"><path d="M4.5 12.8V2" stroke="#999" stroke-width="1.3"/><path d="M1.2 5L4.5 .4L7.8 5Z" fill="#999"/></svg>
<svg style="left:84px;top:208.0px" width="9" height="13" viewBox="0 0 9 13"><path d="M4.5 .2V11" stroke="#999" stroke-width="1.3"/><path d="M1.2 8L4.5 12.6L7.8 8Z" fill="#999"/></svg>
<svg style="left:104.5px;top:208.5px" width="14" height="12" viewBox="0 0 14 12"><path d="M.6 1.2H2M3.6 1.2H13.4" stroke="#2f7dc4" stroke-width="1.7"/><path d="M1 7.6C4 3.4 10 3.4 13 7.6C10 11.6 4 11.6 1 7.6Z" fill="none" stroke="#2f7dc4" stroke-width="1.2"/><circle cx="7" cy="7.6" r="2" fill="#2f7dc4"/></svg>
<svg style="left:128px;top:208.0px" width="16" height="13" viewBox="0 0 16 13"><path d="M.4 1H1.6M3 1H10" stroke="#2f7dc4" stroke-width="1.2"/><path d="M.4 3.8H1.6M3 3.8H10" stroke="#2f7dc4" stroke-width="1.2"/><path d="M.4 6.6H1.6M3 6.6H10" stroke="#2f7dc4" stroke-width="1.2"/><path d="M.4 9.4H1.6M3 9.4H10" stroke="#2f7dc4" stroke-width="1.2"/><path d="M.4 12.2H1.6M3 12.2H10" stroke="#2f7dc4" stroke-width="1.2"/><path d="M13 12.6V3M10.6 4.6L13 1L15.4 4.6Z" fill="#2f7dc4" stroke="#2f7dc4" stroke-width="1.1"/></svg>
<svg style="left:149.0px;top:213.0px" width="7" height="4" viewBox="0 0 7 4"><path d="M0 0H7L3.5 4Z" fill="#222"/></svg>
<svg style="left:168px;top:208.0px" width="16" height="13" viewBox="0 0 16 13"><path d="M.4 1H1.6M3 1H10" stroke="#2f7dc4" stroke-width="1.2"/><path d="M.4 3.8H1.6M3 3.8H10" stroke="#2f7dc4" stroke-width="1.2"/><path d="M.4 6.6H1.6M3 6.6H10" stroke="#2f7dc4" stroke-width="1.2"/><path d="M.4 9.4H1.6M3 9.4H10" stroke="#2f7dc4" stroke-width="1.2"/><path d="M.4 12.2H1.6M3 12.2H10" stroke="#2f7dc4" stroke-width="1.2"/><path d="M13 .4V10M10.6 8.4L13 12L15.4 8.4Z" fill="#2f7dc4" stroke="#2f7dc4" stroke-width="1.1"/></svg>
<svg style="left:190.0px;top:213.0px" width="7" height="4" viewBox="0 0 7 4"><path d="M0 0H7L3.5 4Z" fill="#222"/></svg>
<svg style="left:210px;top:208.0px" width="12" height="13" viewBox="0 0 12 13"><path d="M.4 1H1.6M3 1H10" stroke="#8a8a8a" stroke-width="1.2"/><path d="M.4 3.8H1.6M3 3.8H10" stroke="#8a8a8a" stroke-width="1.2"/><path d="M.4 6.6H1.6M3 6.6H10" stroke="#8a8a8a" stroke-width="1.2"/><path d="M.4 9.4H1.6M3 9.4H10" stroke="#8a8a8a" stroke-width="1.2"/><path d="M.4 12.2H1.6M3 12.2H10" stroke="#8a8a8a" stroke-width="1.2"/></svg>
<svg style="left:230.0px;top:213.0px" width="7" height="4" viewBox="0 0 7 4"><path d="M0 0H7L3.5 4Z" fill="#222"/></svg>
<svg style="left:249px;top:207.0px" width="18" height="15" viewBox="0 0 18 15"><path d="M3 .6H15V4H3Z M1 4.4H17L10.6 9.6H7.4Z" fill="#2f7dc4"/><path d="M1 4.4H17L10.6 9.6H7.4Z" fill="#7a7a7a"/><path d="M3 .6H15V4H3Z" fill="#2f7dc4"/><path d="M9 9.4V14" stroke="#2f7dc4" stroke-width="1.6"/></svg>
<svg style="left:269.5px;top:213.0px" width="7" height="4" viewBox="0 0 7 4"><path d="M0 0H7L3.5 4Z" fill="#222"/></svg>
<div class="inp" style="left:10px;top:232px;width:282px;height:17px;border-color:#b9bfc8"></div>
<div id="t71" class="t tr" style="left:13px;top:232.5px;letter-spacing:-0.180px;color:#8a8a8a;">Type filter text</div>
<svg style="left:302px;top:233px" width="14" height="14" viewBox="0 0 14 14"><path d="M12 7.4A5.2 5.2 0 1 1 9.6 2.8" fill="none" stroke="#2f7dc4" stroke-width="1.5"/><path d="M8 .6H12.6V5.2Z" fill="#2f7dc4"/></svg>
<div class="tree"></div>
<svg style="left:15.5px;top:262px" width="9" height="6" viewBox="0 0 9 6"><path d="M.8 .8L4.5 4.6L8.2 .8" fill="none" stroke="#222" stroke-width="1.4"/></svg>
<svg style="left:31px;top:257px" width="16" height="16" viewBox="0 0 16 16"><path d="M0 8.2L6 2H11L16 8.2L11 14.2H6Z" fill="#2f7dc4"/><path d="M9.6 3.4L5 8.2L9.6 13" fill="none" stroke="#fff" stroke-width="1.5"/></svg>
<div id="t72" class="t tr" style="left:53px;top:257px;letter-spacing:-0.164px;">equivalent_properties_of_periodic_microstructures</div>
<svg style="left:35.5px;top:280px" width="9" height="6" viewBox="0 0 9 6"><path d="M.8 .8L4.5 4.6L8.2 .8" fill="none" stroke="#222" stroke-width="1.4"/></svg>
<svg style="left:51px;top:275px" width="16" height="16" viewBox="0 0 16 16"><circle cx="8" cy="8" r="7" fill="#e3effa" stroke="#2f7dc4" stroke-width="1.2"/><ellipse cx="8" cy="8" rx="3.2" ry="7" fill="none" stroke="#2f7dc4" stroke-width="1"/><path d="M1 8H15M2 4.6H14M2 11.4H14M8 1V15" stroke="#2f7dc4" stroke-width="1"/></svg>
<div id="t73" class="t tr" style="left:73px;top:275px;letter-spacing:-0.084px;">Global Definitions</div>
<div id="t74" class="t " style="left:72px;top:293px;font-size:13px;color:#2f7dc4;">P</div><div id="t75" class="t " style="left:80px;top:295px;font-size:10px;color:#2f7dc4;">i</div>
<div id="t76" class="t tr" style="left:93px;top:293px;letter-spacing:-0.400px;">Parameters</div>
<svg style="left:56.8px;top:314.5px" width="6" height="9" viewBox="0 0 6 9"><path d="M.8 .8L4.6 4.5L.8 8.2" fill="none" stroke="#808080" stroke-width="1.3"/></svg>
<svg style="left:71px;top:311px" width="16" height="16" viewBox="0 0 16 16"><circle cx="8" cy="8" r="7" fill="#fdeee6" stroke="#e2673b" stroke-width="1.2"/><path d="M4 12.4L8 3.6L12 12.4M4.6 5.4C7 9 9 9 11.4 5.4" fill="none" stroke="#e2673b" stroke-width="1.1"/></svg>
<div id="t77" class="t tr" style="left:93px;top:311px;letter-spacing:-0.311px;">Geometry Parts</div>
<svg style="left:71px;top:329px" width="16" height="16" viewBox="0 0 16 16"><path d="M.6 10L5.6 5H9.6L14 10L9.6 15H5.6Z" fill="#2f7dc4"/><path d="M8.6 6.2L5 10L8.6 13.8" fill="none" stroke="#fff" stroke-width="1.3"/><path d="M10.6 .6L15.6 4L10.6 7.4Z" fill="#1f9e8c"/></svg>
<div id="t78" class="t tr" style="left:93px;top:329px;letter-spacing:-0.040px;">Default Model Inputs</div>
<svg style="left:71px;top:347px" width="16" height="16" viewBox="0 0 16 16"><circle cx="8" cy="8" r="7" fill="#fdf1df" stroke="#e8943a" stroke-width="1.2"/><rect x="6.5" y="3" width="3" height="3" fill="#e8943a"/><rect x="3.4" y="6.4" width="3" height="3" fill="#e8943a"/><rect x="7.2" y="7" width="3" height="3" fill="#e8943a"/><rect x="10.4" y="5.6" width="3" height="3" fill="#e8943a"/><rect x="4.6" y="10" width="3" height="3" fill="#e8943a"/><rect x="8.6" y="10.6" width="3" height="3" fill="#e8943a"/></svg>
<div id="t79" class="t tr" style="left:93px;top:347px;letter-spacing:-0.162px;">Materials</div>
<svg style="left:56.8px;top:368.5px" width="6" height="9" viewBox="0 0 6 9"><path d="M.8 .8L4.6 4.5L.8 8.2" fill="none" stroke="#808080" stroke-width="1.3"/></svg>
<svg style="left:71px;top:365px" width="16" height="16" viewBox="0 0 16 16"><rect x="1" y="1" width="14" height="14" fill="none" stroke="#555" stroke-width="1" stroke-dasharray="1.6 1.4"/><path d="M8 2.6L10.6 6.6H5.4Z" fill="#c2306a"/><path d="M8 13.4L5.4 9.4H10.6Z" fill="#2f7dc4"/><path d="M2 8H14" stroke="#555" stroke-width="1"/></svg>
<div id="t80" class="t tr" style="left:93px;top:365px;letter-spacing:-0.197px;">Load and Constraint Groups</div>
<svg style="left:35.5px;top:388px" width="9" height="6" viewBox="0 0 9 6"><path d="M.8 .8L4.5 4.6L8.2 .8" fill="none" stroke="#222" stroke-width="1.4"/></svg>
<svg style="left:51px;top:383px" width="16" height="16" viewBox="0 0 16 16"><path d="M1.6 4.2L4.2 1.6H14.4V12L11.8 14.6H1.6Z" fill="#2f7dc4"/><path d="M2 4.6H11.4V14.2M11.4 4.6L14 2" fill="none" stroke="#cfe3f6" stroke-width=".9"/></svg>
<div id="t81" class="t tr" style="left:73px;top:383px;letter-spacing:-0.085px;">Component 1 <i style="letter-spacing:-.5px">(comp1)</i></div>
<svg style="left:56.8px;top:404.5px" width="6" height="9" viewBox="0 0 6 9"><path d="M.8 .8L4.6 4.5L.8 8.2" fill="none" stroke="#808080" stroke-width="1.3"/></svg>
<svg style="left:71px;top:401px" width="16" height="16" viewBox="0 0 16 16"><path d="M3 4.4H13M3 8H13M3 11.6H13" stroke="#2f7dc4" stroke-width="2"/></svg>
<div id="t82" class="t tr" style="left:93px;top:401px;letter-spacing:0.008px;">Definitions</div>
<svg style="left:56.8px;top:422.5px" width="6" height="9" viewBox="0 0 6 9"><path d="M.8 .8L4.6 4.5L.8 8.2" fill="none" stroke="#808080" stroke-width="1.3"/></svg>
<svg style="left:71px;top:419px" width="16" height="16" viewBox="0 0 16 16"><rect x=".8" y=".8" width="14.4" height="14.4" fill="#fff" stroke="#5aa050" stroke-width="1.1"/><path d="M3 14.6L8 2.6L13 14.6M3.6 5C7 10 9 10 12.4 5" fill="none" stroke="#e2673b" stroke-width="1.2"/></svg>
<div id="t83" class="t tr" style="left:93px;top:419px;letter-spacing:-0.368px;">Geometry 1</div>
<svg style="left:56.8px;top:440.5px" width="6" height="9" viewBox="0 0 6 9"><path d="M.8 .8L4.6 4.5L.8 8.2" fill="none" stroke="#808080" stroke-width="1.3"/></svg>
<svg style="left:71px;top:437px" width="16" height="16" viewBox="0 0 16 16"><rect x="6" y="1" width="3.8" height="3.8" fill="#f0a33f"/><rect x="1.6" y="4" width="3.8" height="3.8" fill="#e8943a"/><rect x="6.4" y="6" width="3.8" height="3.8" fill="#f5b85c"/><rect x="11" y="4" width="3.8" height="3.8" fill="#e8943a"/><rect x="2" y="9" width="3.8" height="3.8" fill="#f0a33f"/><rect x="7" y="11" width="3.8" height="3.8" fill="#e8943a"/><rect x="11.4" y="9" width="3.8" height="3.8" fill="#f5b85c"/></svg>
<div id="t84" class="t tr" style="left:93px;top:437px;letter-spacing:-0.162px;">Materials</div>
<svg style="left:55.5px;top:460px" width="9" height="6" viewBox="0 0 9 6"><path d="M.8 .8L4.5 4.6L8.2 .8" fill="none" stroke="#222" stroke-width="1.4"/></svg>
<svg style="left:71px;top:455px" width="16" height="16" viewBox="0 0 16 16"><path d="M2 1C0 5 3 9 1.6 15" fill="none" stroke="#e8943a" stroke-width="1.4"/><path d="M4.4 5L6.8 2.6H15.4V11.6L13 14H4.4Z" fill="#e8943a"/><path d="M4.8 5.4H12.6V13.6M12.6 5.4L15 3" fill="none" stroke="#fbe0b8" stroke-width=".9"/></svg>
<div id="t85" class="t tr" style="left:93px;top:455px;letter-spacing:-0.230px;">Heat Transfer in Solids <i style="letter-spacing:-.5px">(ht)</i></div>
<svg style="left:91px;top:473px" width="16" height="16" viewBox="0 0 16 16"><path d="M3 5.4H13A2 4 0 0 1 13 13.4H3A2 4 0 0 1 3 5.4Z" fill="#2f7dc4"/><path d="M3 5.4H13A2 4 0 0 1 13 9.4H1.4A2 4 0 0 1 3 5.4Z" fill="#2f7dc4" stroke="#2f7dc4" stroke-width="0"/><path d="M1.2 9.2H14.6" stroke="#fff" stroke-width=".9"/><ellipse cx="3" cy="9.4" rx="1.7" ry="4" fill="#dfe7ef" stroke="#888" stroke-width=".7"/><path d="M1 .7H2.8A2.1 2.1 0 0 1 2.8 4.9H1Z" fill="#fff" stroke="#222" stroke-width="1.2"/><circle cx="3" cy="7.6" r="1.5" fill="#d9502f"/></svg>
<div id="t86" class="t tr" style="left:113px;top:473px;letter-spacing:-0.468px;">Solid 1</div>
<svg style="left:91px;top:491px" width="16" height="16" viewBox="0 0 16 16"><path d="M3 5.4H13A2 4 0 0 1 13 13.4H3A2 4 0 0 1 3 5.4Z" fill="#2f7dc4"/><path d="M3 5.4H13A2 4 0 0 1 13 9.4H1.4A2 4 0 0 1 3 5.4Z" fill="#2f7dc4" stroke="#2f7dc4" stroke-width="0"/><path d="M1.2 9.2H14.6" stroke="#fff" stroke-width=".9"/><ellipse cx="3" cy="9.4" rx="1.7" ry="4" fill="#dfe7ef" stroke="#888" stroke-width=".7"/><path d="M1 .7H2.8A2.1 2.1 0 0 1 2.8 4.9H1Z" fill="#fff" stroke="#222" stroke-width="1.2"/><circle cx="3" cy="7.6" r="1.5" fill="#d9502f"/></svg>
<div id="t87" class="t tr" style="left:113px;top:491px;letter-spacing:-0.336px;">Initial Values 1</div>
<svg style="left:91px;top:509px" width="16" height="16" viewBox="0 0 16 16"><path d="M3 5.4H13A2 4 0 0 1 13 13.4H3A2 4 0 0 1 3 5.4Z" fill="#2f7dc4"/><path d="M3 5.4H13A2 4 0 0 1 13 9.4H1.4A2 4 0 0 1 3 5.4Z" fill="#e8eef5" stroke="#2f7dc4" stroke-width="0.8"/><path d="M1.2 9.2H14.6" stroke="#fff" stroke-width=".9"/><ellipse cx="3" cy="9.4" rx="1.7" ry="4" fill="#dfe7ef" stroke="#888" stroke-width=".7"/><path d="M1 .7H2.8A2.1 2.1 0 0 1 2.8 4.9H1Z" fill="#fff" stroke="#222" stroke-width="1.2"/></svg>
<div id="t88" class="t tr" style="left:113px;top:509px;letter-spacing:-0.222px;">Thermal Insulation 1</div>
<div class="abs" style="left:11px;top:526px;width:308px;height:17px;background:#cde4f7"></div>
<svg style="left:75.5px;top:532px" width="9" height="6" viewBox="0 0 9 6"><path d="M.8 .8L4.5 4.6L8.2 .8" fill="none" stroke="#222" stroke-width="1.4"/></svg>
<svg style="left:91px;top:527px" width="16" height="16" viewBox="0 0 16 16"><path d="M3 3.4H13A2 4.6 0 0 1 13 12.6H3Z" fill="#2f7dc4"/><path d="M2 8H14.8" stroke="#fff" stroke-width=".9"/><ellipse cx="3" cy="8" rx="1.9" ry="4.6" fill="#e6eef7" stroke="#3b6ea5" stroke-width=".9"/></svg>
<div id="t89" class="t tr" style="left:113px;top:527px;letter-spacing:-0.209px;">Cell Periodicity 1</div>
<svg style="left:111px;top:545px" width="16" height="16" viewBox="0 0 16 16"><path d="M3 3.4H13A2 4.6 0 0 1 13 12.6H3Z" fill="#eef2f6" stroke="#999" stroke-width=".8"/><path d="M3 8H14.9A2 4.6 0 0 1 13 12.6H3Z" fill="#2f7dc4"/><ellipse cx="3" cy="8" rx="1.9" ry="4.6" fill="#e6eef7" stroke="#999" stroke-width=".9"/></svg>
<div id="t90" class="t tr" style="left:133px;top:545px;letter-spacing:-0.361px;">Boundary Pair 1</div>
<svg style="left:111px;top:563px" width="16" height="16" viewBox="0 0 16 16"><path d="M3 3.4H13A2 4.6 0 0 1 13 12.6H3Z" fill="#eef2f6" stroke="#999" stroke-width=".8"/><path d="M3 8H14.9A2 4.6 0 0 1 13 12.6H3Z" fill="#2f7dc4"/><ellipse cx="3" cy="8" rx="1.9" ry="4.6" fill="#e6eef7" stroke="#999" stroke-width=".9"/></svg>
<div id="t91" class="t tr" style="left:133px;top:563px;letter-spacing:-0.294px;">Boundary Pair 2</div>
<svg style="left:111px;top:581px" width="16" height="16" viewBox="0 0 16 16"><path d="M3 3.4H13A2 4.6 0 0 1 13 12.6H3Z" fill="#eef2f6" stroke="#999" stroke-width=".8"/><path d="M3 8H14.9A2 4.6 0 0 1 13 12.6H3Z" fill="#2f7dc4"/><ellipse cx="3" cy="8" rx="1.9" ry="4.6" fill="#e6eef7" stroke="#999" stroke-width=".9"/></svg>
<div id="t92" class="t tr" style="left:133px;top:581px;letter-spacing:-0.294px;">Boundary Pair 3</div>
<svg style="left:56.8px;top:602.5px" width="6" height="9" viewBox="0 0 6 9"><path d="M.8 .8L4.6 4.5L.8 8.2" fill="none" stroke="#808080" stroke-width="1.3"/></svg>
<svg style="left:71px;top:599px" width="16" height="16" viewBox="0 0 16 16"><path d="M8 1.6L15 14.4H1Z" fill="#d4d4d4" stroke="#888" stroke-width="1"/><path d="M4.5 8H11.5M8 1.6L4.5 8L8 14.4L11.5 8Z" fill="none" stroke="#888" stroke-width=".8"/></svg>
<div id="t93" class="t tr" style="left:93px;top:599px;letter-spacing:-0.495px;">Mesh 1</div>
<svg style="left:36.8px;top:620.5px" width="6" height="9" viewBox="0 0 6 9"><path d="M.8 .8L4.6 4.5L.8 8.2" fill="none" stroke="#808080" stroke-width="1.3"/></svg>
<svg style="left:51px;top:617px" width="16" height="16" viewBox="0 0 16 16"><path d="M1.6 4.2L4.2 1.6H14.4V12L11.8 14.6H1.6Z" fill="#2f7dc4"/><path d="M2 4.6H11.4V14.2M11.4 4.6L14 2" fill="none" stroke="#cfe3f6" stroke-width=".9"/></svg>
<div id="t94" class="t tr" style="left:73px;top:617px;letter-spacing:-0.085px;">Component 2 <i style="letter-spacing:-.5px">(comp2)</i></div>
<svg style="left:36.8px;top:638.5px" width="6" height="9" viewBox="0 0 6 9"><path d="M.8 .8L4.6 4.5L.8 8.2" fill="none" stroke="#808080" stroke-width="1.3"/></svg>
<svg style="left:51px;top:635px" width="16" height="16" viewBox="0 0 16 16"><path d="M.6 8C1.6 5.4 3.6 5.4 4.8 8" fill="none" stroke="#1f9aa8" stroke-width="1.2"/><circle cx="7.6" cy="9" r="2.4" fill="none" stroke="#1f9aa8" stroke-width="1.2"/><circle cx="13" cy="9" r="2.4" fill="none" stroke="#1f9aa8" stroke-width="1.2"/></svg>
<div id="t95" class="t tr" style="left:73px;top:635px;letter-spacing:-0.236px;">Study</div>
<svg style="left:36.8px;top:656.5px" width="6" height="9" viewBox="0 0 6 9"><path d="M.8 .8L4.6 4.5L.8 8.2" fill="none" stroke="#808080" stroke-width="1.3"/></svg>
<svg style="left:51px;top:653px" width="16" height="16" viewBox="0 0 16 16"><rect x="2.4" y="1" width="9.6" height="8" fill="#eee" stroke="#777" stroke-width=".8"/><rect x="4" y="2.8" width="9.6" height="8" fill="#eee" stroke="#777" stroke-width=".8"/><rect x="5.6" y="4.6" width="9.6" height="8" fill="#f6f6f6" stroke="#777" stroke-width=".8"/><rect x="7" y="6" width="6.8" height="5.2" fill="#b0399a"/><path d="M.8 8L3 10.6V14.6H13V13" fill="#d9d9d9" stroke="#777" stroke-width=".8"/></svg>
<div id="t96" class="t tr" style="left:73px;top:653px;letter-spacing:-0.522px;">Results</div>
<div class="abs" style="left:11px;top:976px;width:308px;height:16px;background:#f1f1f1"></div>
<div class="abs" style="left:28px;top:976px;width:229px;height:16px;background:#d8dadd"></div>
<div class="abs" style="left:257px;top:976px;width:45px;height:16px;background:#fff"></div>
<svg style="left:16.5px;top:979.5px" width="5" height="9" viewBox="0 0 5 9"><path d="M4.2 .8L.9 4.5L4.2 8.2" fill="none" stroke="#aaa" stroke-width="1.3"/></svg>
<svg style="left:308px;top:979.5px" width="5" height="9" viewBox="0 0 5 9"><path d="M.8 .8L4.1 4.5L.8 8.2" fill="none" stroke="#aaa" stroke-width="1.3"/></svg>
<div class="panel" style="left:332px;top:172px;width:371px;height:828px"></div>
<div id="t97" class="t ptitle" style="left:338.5px;top:183.9px;letter-spacing:-1.139px;top:179.5px;color:#2a508c;">Settings</div>
<svg style="left:660px;top:188px" width="8" height="5" viewBox="0 0 8 5"><path d="M0 0H8L4 4.6Z" fill="#a9c4e2"/></svg>
<svg style="left:674.5px;top:186px" width="9" height="8" viewBox="0 0 9 8"><rect x=".5" y=".5" width="8" height="7" fill="none" stroke="#a9c4e2" stroke-width="1"/><path d="M.5 1.2H8.5" stroke="#a9c4e2" stroke-width="1.4"/></svg>
<svg style="left:689.5px;top:185px" width="7" height="11" viewBox="0 0 7 11"><path d="M1.4 .4H5.6V4.6L7 6.2H0L1.4 4.6Z" fill="#a9c4e2"/><path d="M3.5 6V10.6" stroke="#a9c4e2" stroke-width="1.1"/></svg>
<div id="t98" class="t lab" style="left:338px;top:206.9px;letter-spacing:0.275px;color:#2b5a9b;">Cell Periodicity</div>
<div id="t99" class="t lab" style="left:337px;top:239.9px;letter-spacing:-0.370px;">Label:</div>
<div class="inp" style="left:378px;top:239.6px;width:291px;height:17px"></div>
<div id="t100" class="t lab" style="left:381px;top:239.9px;letter-spacing:-0.209px;">Cell Periodicity 1</div>
<div class="abs" style="left:677px;top:237px;width:20px;height:21px;background:#eef0f2;border:1px solid #cfd2d6;border-radius:2px"></div>
<svg style="left:680px;top:241px" width="14" height="13" viewBox="0 0 14 13"><rect x="1.6" y=".6" width="11.8" height="9.4" fill="#fff" stroke="#666" stroke-width="1"/><path d="M1.6 2.6H13.4" stroke="#666" stroke-width="1.2"/><path d="M4 5H11.6M5.6 7.4H11.6" stroke="#2f7dc4" stroke-width="1"/><path d="M.4 12.4L4 8.8M.6 8.8H4V12.2" fill="none" stroke="#1f9e8c" stroke-width="1.2"/></svg>
<div class="hline" style="top:268px"></div>
<div class="hline" style="top:297px"></div>
<div class="hline" style="top:326px"></div>
<div class="hline" style="top:524px"></div>
<svg style="left:339.5px;top:278.5px" width="5" height="8" viewBox="0 0 5 8"><path d="M.7 .7L4 4L.7 7.3" fill="none" stroke="#222" stroke-width="1.4"/></svg>
<div id="t101" class="t sec" style="left:358px;top:274.9px;letter-spacing:0.040px;">Domain Selection</div>
<svg style="left:339.5px;top:307.5px" width="5" height="8" viewBox="0 0 5 8"><path d="M.7 .7L4 4L.7 7.3" fill="none" stroke="#222" stroke-width="1.4"/></svg>
<div id="t102" class="t sec" style="left:358px;top:303.9px;letter-spacing:0.319px;">Override and Contribution</div>
<svg style="left:338px;top:338.5px" width="8" height="5" viewBox="0 0 8 5"><path d="M.7 .7L4 4L7.3 .7" fill="none" stroke="#2f7dc4" stroke-width="1.3"/></svg>
<div id="t103" class="t sec" style="left:358px;top:332.9px;letter-spacing:0.116px;">Equation</div>
<svg style="left:338px;top:536.5px" width="8" height="5" viewBox="0 0 8 5"><path d="M.7 .7L4 4L7.3 .7" fill="none" stroke="#2f7dc4" stroke-width="1.3"/></svg>
<div id="t104" class="t sec" style="left:358px;top:530.9px;letter-spacing:0.033px;">Cell Properties</div>
<div id="t105" class="t lab" style="left:337px;top:361.9px;letter-spacing:-0.199px;">Show equation assuming:</div>
<div class="abs" style="left:337px;top:383px;width:360px;height:20px;background:#eff0f1;border:1px solid #d6d8db;border-radius:2px"></div>
<div id="t106" class="t lab" style="left:350px;top:385.9px;letter-spacing:-0.171px;">Study, Stationary</div>
<svg style="left:682.5px;top:392px" width="7" height="4" viewBox="0 0 7 4"><path d="M0 0H7L3.5 4Z" fill="#222"/></svg>
<div class="t" style="left:339.5px;top:412.0px;height:18px;line-height:18px;font-size:13.5px;font-family:"Liberation Sans",sans-serif;color:#111;"><i>T</i></div>
<div class="t" style="left:348.5px;top:418.6px;height:14px;line-height:14px;font-size:10.5px;font-family:"Liberation Sans",sans-serif;color:#111;">dst</div>
<div class="t" style="left:367.5px;top:408.8px;height:22px;line-height:22px;font-size:17px;font-family:"Liberation Serif",serif;color:#111;">=</div>
<div class="t" style="left:380.5px;top:412.0px;height:18px;line-height:18px;font-size:13.5px;font-family:"Liberation Sans",sans-serif;color:#111;"><i>T</i></div>
<div class="t" style="left:389.5px;top:418.6px;height:14px;line-height:14px;font-size:10.5px;font-family:"Liberation Sans",sans-serif;color:#111;">src</div>
<div class="t" style="left:408.5px;top:407.9px;height:23px;line-height:23px;font-size:18px;font-family:"Liberation Serif",serif;color:#111;">+</div>
<div class="t" style="left:422.5px;top:410.5px;height:20px;line-height:20px;font-size:15px;font-family:"DejaVu Serif","Liberation Serif",serif;color:#111;">&nabla;</div>
<div class="t" style="left:433px;top:413.4px;height:16px;line-height:16px;font-size:12.5px;font-family:"Liberation Sans",sans-serif;color:#111;"><i>T</i></div>
<div class="t" style="left:443.5px;top:408.8px;height:22px;line-height:22px;font-size:17px;font-family:"Liberation Serif",serif;color:#111;">&middot;</div>
<div class="t" style="left:451px;top:408.9px;height:23px;line-height:23px;font-size:18px;font-family:"Liberation Serif",serif;color:#111;">(</div>
<div class="t" style="left:457.5px;top:410.3px;height:20px;line-height:20px;font-size:15.5px;font-family:"Liberation Sans",sans-serif;color:#111;"><b>x</b></div>
<div class="t" style="left:468px;top:418.6px;height:14px;line-height:14px;font-size:10.5px;font-family:"Liberation Sans",sans-serif;color:#111;">dst</div>
<div class="t" style="left:486.5px;top:407.9px;height:23px;line-height:23px;font-size:18px;font-family:"Liberation Serif",serif;color:#111;">&minus;</div>
<div class="t" style="left:500.5px;top:410.3px;height:20px;line-height:20px;font-size:15.5px;font-family:"Liberation Sans",sans-serif;color:#111;"><b>x</b></div>
<div class="t" style="left:511px;top:418.6px;height:14px;line-height:14px;font-size:10.5px;font-family:"Liberation Sans",sans-serif;color:#111;">src</div>
<div class="t" style="left:525.5px;top:408.9px;height:23px;line-height:23px;font-size:18px;font-family:"Liberation Serif",serif;color:#111;">)</div>
<div class="t" style="left:535px;top:413.4px;height:16px;line-height:16px;font-size:12.5px;font-family:"Liberation Sans",sans-serif;color:#111;">on</div>
<div class="t" style="left:552px;top:409.5px;height:21px;line-height:21px;font-size:16.5px;font-family:"Liberation Serif",serif;color:#111;">&part;&Omega;</div>
<div class="t" style="left:339px;top:442.0px;height:18px;line-height:18px;font-size:13.5px;font-family:"Liberation Sans",sans-serif;color:#111;"><i>C</i></div>
<div class="t" style="left:348.5px;top:449.1px;height:14px;line-height:14px;font-size:10.5px;font-family:"Liberation Sans",sans-serif;color:#111;"><i>p</i>,eff</div>
<div class="t" style="left:376.5px;top:438.8px;height:22px;line-height:22px;font-size:17px;font-family:"Liberation Serif",serif;color:#111;">=</div>
<div class="t" style="left:407.5px;top:434.4px;height:18px;line-height:18px;font-size:14px;font-family:"Liberation Serif",serif;color:#111;">1</div>
<div class="abs" style="left:390px;top:450px;width:40px;height:1px;background:#111"></div>
<div class="t" style="left:390.5px;top:452.7px;height:19px;line-height:19px;font-size:14.5px;font-family:"Liberation Serif",serif;color:#111;">|&Omega;|</div>
<div class="t" style="left:408px;top:452.7px;height:19px;line-height:19px;font-size:14.5px;font-family:"Liberation Serif",serif;color:#111;"><i>&rho;</i></div>
<div class="t" style="left:416px;top:459.6px;height:14px;line-height:14px;font-size:10.5px;font-family:"Liberation Sans",sans-serif;color:#111;">eff</div>
<svg style="left:431px;top:440px" width="15" height="31" viewBox="0 0 15 31"><path d="M13.6 2.2C12.6 .4 10.4 .8 10 3.4L5.2 27C4.8 29.8 2.6 30.4 1.4 28.6" fill="none" stroke="#111" stroke-width="1.15"/><circle cx="13.3" cy="2.6" r="1" fill="#111"/><circle cx="1.7" cy="28.2" r="1" fill="#111"/></svg>
<div class="t" style="left:442.5px;top:459.6px;height:14px;line-height:14px;font-size:10.5px;font-family:"Liberation Serif",serif;color:#111;">&Omega;</div>
<div class="t" style="left:452.5px;top:440.5px;height:20px;line-height:20px;font-size:15px;font-family:"Liberation Serif",serif;color:#111;"><i>&rho;</i></div>
<div class="t" style="left:461.5px;top:442.0px;height:18px;line-height:18px;font-size:13.5px;font-family:"Liberation Sans",sans-serif;color:#111;"><i>C</i></div>
<div class="t" style="left:471.5px;top:449.1px;height:14px;line-height:14px;font-size:10.5px;font-family:"Liberation Sans",sans-serif;color:#111;"><i>p</i></div>
<div class="t" style="left:478px;top:442.0px;height:18px;line-height:18px;font-size:13.5px;font-family:"Liberation Sans",sans-serif;color:#111;">d</div>
<div class="t" style="left:485px;top:440.3px;height:20px;line-height:20px;font-size:15.5px;font-family:"Liberation Serif",serif;color:#111;">&Omega;</div>
<div class="t" style="left:339px;top:479.6px;height:21px;line-height:21px;font-size:16px;font-family:"Liberation Serif",serif;color:#111;"><i>&rho;</i></div>
<div class="t" style="left:348px;top:489.1px;height:14px;line-height:14px;font-size:10.5px;font-family:"Liberation Sans",sans-serif;color:#111;">eff</div>
<div class="t" style="left:366.5px;top:478.8px;height:22px;line-height:22px;font-size:17px;font-family:"Liberation Serif",serif;color:#111;">=</div>
<div class="t" style="left:386px;top:474.4px;height:18px;line-height:18px;font-size:14px;font-family:"Liberation Serif",serif;color:#111;">1</div>
<div class="abs" style="left:381px;top:490px;width:17px;height:1px;background:#111"></div>
<div class="t" style="left:381px;top:492.7px;height:19px;line-height:19px;font-size:14.5px;font-family:"Liberation Serif",serif;color:#111;">|&Omega;|</div>
<svg style="left:398px;top:480px" width="15" height="31" viewBox="0 0 15 31"><path d="M13.6 2.2C12.6 .4 10.4 .8 10 3.4L5.2 27C4.8 29.8 2.6 30.4 1.4 28.6" fill="none" stroke="#111" stroke-width="1.15"/><circle cx="13.3" cy="2.6" r="1" fill="#111"/><circle cx="1.7" cy="28.2" r="1" fill="#111"/></svg>
<div class="t" style="left:409.5px;top:499.6px;height:14px;line-height:14px;font-size:10.5px;font-family:"Liberation Serif",serif;color:#111;">&Omega;</div>
<div class="t" style="left:419.5px;top:480.5px;height:20px;line-height:20px;font-size:15px;font-family:"Liberation Serif",serif;color:#111;"><i>&rho;</i></div>
<div class="t" style="left:428.5px;top:482.0px;height:18px;line-height:18px;font-size:13.5px;font-family:"Liberation Sans",sans-serif;color:#111;">d</div>
<div class="t" style="left:435.5px;top:480.3px;height:20px;line-height:20px;font-size:15.5px;font-family:"Liberation Serif",serif;color:#111;">&Omega;</div>
<svg style="left:667px;top:533px" width="11" height="11" viewBox="0 0 11 11"><rect x=".5" y=".5" width="10" height="10" rx="1.4" fill="#2f7dc4"/><path d="M.5 4H10.5M.5 7.4H10.5M4 .5V10.5M7.4 .5V10.5" stroke="#dcebfa" stroke-width=".8"/></svg>
<svg style="left:684.5px;top:537px" width="7" height="4" viewBox="0 0 7 4"><path d="M0 0H7L3.5 4Z" fill="#222"/></svg>
<div id="t107" class="t lab" style="left:337px;top:559.9px;letter-spacing:-0.048px;">Boundary condition type:</div>
<div class="abs" style="left:337px;top:581px;width:360px;height:20px;background:#cce4f8;border:1px solid #3f8ad6;border-radius:2px"></div>
<div id="t108" class="t lab" style="left:350px;top:583.9px;letter-spacing:-0.107px;">Periodic temperature</div>
<svg style="left:682.5px;top:590px" width="7" height="4" viewBox="0 0 7 4"><path d="M0 0H7L3.5 4Z" fill="#222"/></svg>
<div id="t109" class="t lab" style="left:337px;top:607.9px;letter-spacing:-0.261px;">Temperature scale factor:</div>
<div class="t" style="left:340px;top:626.6px;height:21px;line-height:21px;font-size:16px;font-family:"Liberation Serif",serif;color:#111;"><i>&lambda;</i></div>
<div class="t" style="left:348.5px;top:636.3px;height:13px;line-height:13px;font-size:10px;font-family:"Liberation Sans",sans-serif;color:#111;"><i>T</i></div>
<div class="inp" style="left:367px;top:630px;width:314px;height:17px"></div>
<div id="t110" class="t lab" style="left:370px;top:630.9px;">1</div>
<div id="t111" class="t lab" style="left:691px;top:630.9px;">1</div>
<div class="panel" style="left:709px;top:172px;width:1181px;height:828px;overflow:hidden"></div>
<svg style="left:709px;top:203px" width="1181" height="797" viewBox="709 203 1181 797"><defs><linearGradient id="bg" gradientUnits="userSpaceOnUse" x1="0.0" y1="228.0" x2="0.0" y2="999.0"><stop offset="0.000" stop-color="#f8f9fc"/><stop offset="0.070" stop-color="#f8f9fc"/><stop offset="0.085" stop-color="#f5f8fc"/><stop offset="0.400" stop-color="#f0f6fc"/><stop offset="0.700" stop-color="#eaf3fc"/><stop offset="1.000" stop-color="#e4f1fb"/></linearGradient><filter id="b8" x="-20%" y="-20%" width="140%" height="140%"><feGaussianBlur stdDeviation="7"/></filter><filter id="b4" x="-20%" y="-20%" width="140%" height="140%"><feGaussianBlur stdDeviation="4"/></filter><filter id="b12" x="-30%" y="-30%" width="160%" height="160%"><feGaussianBlur stdDeviation="12"/></filter><clipPath id="cv"><rect x="709" y="203" width="1180" height="796"/></clipPath><linearGradient id="gL" gradientUnits="userSpaceOnUse" x1="903.0" y1="479.4" x2="1038.6" y2="750.6"><stop offset="0.000" stop-color="#b0ac98"/><stop offset="0.030" stop-color="#aaa690"/><stop offset="0.080" stop-color="#a8a070"/><stop offset="0.130" stop-color="#a89a58"/><stop offset="0.210" stop-color="#b09440"/><stop offset="0.295" stop-color="#b08838"/><stop offset="0.378" stop-color="#a07038"/><stop offset="0.460" stop-color="#8c5444"/><stop offset="0.544" stop-color="#7a4060"/><stop offset="0.627" stop-color="#663068"/><stop offset="0.726" stop-color="#4c2668"/><stop offset="0.826" stop-color="#3a2064"/><stop offset="0.960" stop-color="#2e1a5c"/><stop offset="1.000" stop-color="#2a1856"/></linearGradient><linearGradient id="gE" gradientUnits="userSpaceOnUse" x1="0.0" y1="541.0" x2="0.0" y2="890.0"><stop offset="0.000" stop-color="#ffffff"/><stop offset="0.030" stop-color="#ffffff"/><stop offset="0.128" stop-color="#fffbe0"/><stop offset="0.240" stop-color="#fdf0a0"/><stop offset="0.323" stop-color="#fce070"/><stop offset="0.404" stop-color="#f8c060"/><stop offset="0.470" stop-color="#f4a060"/><stop offset="0.534" stop-color="#ee8878"/><stop offset="0.600" stop-color="#e070a0"/><stop offset="0.664" stop-color="#c860c0"/><stop offset="0.730" stop-color="#a850c0"/><stop offset="0.810" stop-color="#8444b0"/><stop offset="0.890" stop-color="#6038a0"/><stop offset="0.970" stop-color="#48298a"/><stop offset="1.000" stop-color="#3a2070"/></linearGradient><linearGradient id="gS" gradientUnits="userSpaceOnUse" x1="1028.3" y1="547.0" x2="1134.4" y2="854.4"><stop offset="0.000" stop-color="#ccc8ae"/><stop offset="0.030" stop-color="#c8c4a8"/><stop offset="0.110" stop-color="#c0b480"/><stop offset="0.190" stop-color="#c0a850"/><stop offset="0.270" stop-color="#c8a040"/><stop offset="0.355" stop-color="#c89048"/><stop offset="0.436" stop-color="#c07850"/><stop offset="0.518" stop-color="#b06068"/><stop offset="0.600" stop-color="#a04c80"/><stop offset="0.680" stop-color="#884090"/><stop offset="0.763" stop-color="#683490"/><stop offset="0.845" stop-color="#4c2a80"/><stop offset="0.927" stop-color="#382068"/><stop offset="1.000" stop-color="#2c195a"/></linearGradient><linearGradient id="gY" gradientUnits="userSpaceOnUse" x1="1127.9" y1="515.0" x2="1086.3" y2="851.4"><stop offset="0.000" stop-color="#ffffff"/><stop offset="0.060" stop-color="#ffffe8"/><stop offset="0.120" stop-color="#fffb90"/><stop offset="0.200" stop-color="#fff455"/><stop offset="0.274" stop-color="#fff050"/><stop offset="0.330" stop-color="#ffe04c"/><stop offset="0.382" stop-color="#ffc858"/><stop offset="0.440" stop-color="#ffa868"/><stop offset="0.490" stop-color="#ff9080"/><stop offset="0.545" stop-color="#f878a0"/><stop offset="0.596" stop-color="#f068b8"/><stop offset="0.650" stop-color="#e85ccc"/><stop offset="0.705" stop-color="#d858d8"/><stop offset="0.760" stop-color="#bc50d6"/><stop offset="0.813" stop-color="#a04cd0"/><stop offset="0.870" stop-color="#8046c0"/><stop offset="0.921" stop-color="#6040a8"/><stop offset="0.960" stop-color="#4a2c88"/><stop offset="1.000" stop-color="#382470"/></linearGradient><linearGradient id="gV" gradientUnits="userSpaceOnUse" x1="1344.0" y1="541.7" x2="1460.8" y2="841.2"><stop offset="0.000" stop-color="#d8d6be"/><stop offset="0.020" stop-color="#cccab0"/><stop offset="0.070" stop-color="#b8b48c"/><stop offset="0.128" stop-color="#b8a860"/><stop offset="0.185" stop-color="#c49840"/><stop offset="0.250" stop-color="#c89040"/><stop offset="0.333" stop-color="#c8803c"/><stop offset="0.440" stop-color="#c06058"/><stop offset="0.548" stop-color="#a84888"/><stop offset="0.652" stop-color="#8040a0"/><stop offset="0.760" stop-color="#5a3090"/><stop offset="0.867" stop-color="#3a2470"/><stop offset="1.000" stop-color="#2e1b60"/></linearGradient><linearGradient id="gA" gradientUnits="userSpaceOnUse" x1="1601.0" y1="349.0" x2="1701.3" y2="635.5"><stop offset="0.000" stop-color="#aeaa92"/><stop offset="0.030" stop-color="#a9a58c"/><stop offset="0.100" stop-color="#a59a70"/><stop offset="0.180" stop-color="#a09060"/><stop offset="0.333" stop-color="#98783a"/><stop offset="0.487" stop-color="#8a5840"/><stop offset="0.640" stop-color="#704058"/><stop offset="0.794" stop-color="#502a70"/><stop offset="0.948" stop-color="#3a2068"/><stop offset="1.000" stop-color="#2e1a5c"/></linearGradient><linearGradient id="gR" gradientUnits="userSpaceOnUse" x1="1601.0" y1="349.0" x2="1477.2" y2="612.4"><stop offset="0.000" stop-color="#a4a08a"/><stop offset="0.040" stop-color="#a09c80"/><stop offset="0.168" stop-color="#b09840"/><stop offset="0.295" stop-color="#c08838"/><stop offset="0.420" stop-color="#c06850"/><stop offset="0.548" stop-color="#b04c88"/><stop offset="0.675" stop-color="#9844a8"/><stop offset="0.800" stop-color="#7a3ca0"/><stop offset="0.928" stop-color="#5a3090"/><stop offset="1.000" stop-color="#3e2474"/></linearGradient><linearGradient id="gRb" gradientUnits="userSpaceOnUse" x1="1601.0" y1="349.0" x2="1475.9" y2="615.2"><stop offset="0.000" stop-color="#ffffff"/><stop offset="0.030" stop-color="#fffdf0"/><stop offset="0.100" stop-color="#fff0a0"/><stop offset="0.185" stop-color="#ffd860"/><stop offset="0.260" stop-color="#ffb84c"/><stop offset="0.335" stop-color="#ffa048"/><stop offset="0.410" stop-color="#f88868"/><stop offset="0.495" stop-color="#f070a0"/><stop offset="0.580" stop-color="#d858c0"/><stop offset="0.668" stop-color="#b850c8"/><stop offset="0.754" stop-color="#9a48c0"/><stop offset="0.840" stop-color="#7a3cb0"/><stop offset="0.926" stop-color="#5a3098"/><stop offset="1.000" stop-color="#3a2470"/></linearGradient><linearGradient id="gRm" gradientUnits="userSpaceOnUse" x1="1646" y1="400" x2="1700" y2="403"><stop offset="0" stop-color="#fff" stop-opacity="0"/><stop offset="1" stop-color="#fff" stop-opacity="1"/></linearGradient><mask id="mR" maskUnits="userSpaceOnUse" x="1590" y="330" width="150" height="420"><rect x="1590" y="330" width="150" height="420" fill="url(#gRm)"/></mask><linearGradient id="gB1" gradientUnits="userSpaceOnUse" x1="1471.6" y1="291.4" x2="1494.8" y2="361.7"><stop offset="0.000" stop-color="#9b9986"/><stop offset="0.350" stop-color="#948a5c"/><stop offset="0.700" stop-color="#8c7038"/><stop offset="1.000" stop-color="#84523a"/></linearGradient><linearGradient id="gB2" gradientUnits="userSpaceOnUse" x1="1471.6" y1="291.4" x2="1443.3" y2="357.2"><stop offset="0.000" stop-color="#a3a08c"/><stop offset="0.350" stop-color="#9a8c58"/><stop offset="0.700" stop-color="#907038"/><stop offset="1.000" stop-color="#885838"/></linearGradient><linearGradient id="gH1" gradientUnits="userSpaceOnUse" x1="1295.0" y1="354.5" x2="1352.7" y2="643.0"><stop offset="0.000" stop-color="#b2ad9a"/><stop offset="0.030" stop-color="#b3ad96"/><stop offset="0.110" stop-color="#bcb084"/><stop offset="0.190" stop-color="#bca458"/><stop offset="0.270" stop-color="#b89440"/><stop offset="0.350" stop-color="#b47c40"/><stop offset="0.430" stop-color="#ac6448"/><stop offset="0.510" stop-color="#a04c5c"/><stop offset="0.550" stop-color="#9a4064"/><stop offset="0.650" stop-color="#8a3a6a"/><stop offset="1.000" stop-color="#2e1a5c"/></linearGradient><linearGradient id="gH1r" gradientUnits="userSpaceOnUse" x1="1295.0" y1="354.5" x2="1305.2" y2="385.1"><stop offset="0.000" stop-color="#a6a28e" stop-opacity="0.8"/><stop offset="0.350" stop-color="#a6a28e" stop-opacity="0.5"/><stop offset="1.000" stop-color="#a6a28e" stop-opacity="0"/></linearGradient><linearGradient id="gH2" gradientUnits="userSpaceOnUse" x1="1295.0" y1="355.7" x2="1261.0" y2="651.8"><stop offset="0.000" stop-color="#b6b09e"/><stop offset="0.030" stop-color="#b5af98"/><stop offset="0.108" stop-color="#bcad78"/><stop offset="0.188" stop-color="#bca048"/><stop offset="0.268" stop-color="#b8883c"/><stop offset="0.348" stop-color="#b4703f"/><stop offset="0.428" stop-color="#a85850"/><stop offset="0.508" stop-color="#9a4464"/><stop offset="0.600" stop-color="#8a3a6a"/><stop offset="1.000" stop-color="#2e1a5c"/></linearGradient><linearGradient id="gH3" gradientUnits="userSpaceOnUse" x1="0.0" y1="379.0" x2="0.0" y2="481.0"><stop offset="0.000" stop-color="#aba790"/><stop offset="0.400" stop-color="#a09868"/><stop offset="0.750" stop-color="#8f8048"/><stop offset="1.000" stop-color="#806a3c"/></linearGradient><linearGradient id="gF" gradientUnits="userSpaceOnUse" x1="0.0" y1="670.0" x2="0.0" y2="966.0"><stop offset="0.000" stop-color="#28175a"/><stop offset="0.500" stop-color="#2c1a5e"/><stop offset="1.000" stop-color="#36226c"/></linearGradient><linearGradient id="gSe" gradientUnits="userSpaceOnUse" x1="1344.0" y1="0.0" x2="1553.0" y2="0.0"><stop offset="0.000" stop-color="#ffffff"/><stop offset="0.250" stop-color="#f6f4e2"/><stop offset="1.000" stop-color="#e4e1ca"/></linearGradient><linearGradient id="gSg" gradientUnits="userSpaceOnUse" x1="1295.0" y1="0.0" x2="1505.0" y2="0.0"><stop offset="0.000" stop-color="#fcfbee"/><stop offset="1.000" stop-color="#f2efdc"/></linearGradient><linearGradient id="gAO" gradientUnits="userSpaceOnUse" x1="1600" y1="0" x2="1545" y2="0"><stop offset="0" stop-color="#201030" stop-opacity=".28"/><stop offset="1" stop-color="#201030" stop-opacity="0"/></linearGradient><linearGradient id="gAOr" gradientUnits="userSpaceOnUse" x1="1590" y1="0" x2="1676" y2="0"><stop offset="0" stop-color="#1c0e36" stop-opacity=".62"/><stop offset=".36" stop-color="#1c0e36" stop-opacity=".44"/><stop offset=".7" stop-color="#1c0e36" stop-opacity=".16"/><stop offset="1" stop-color="#1c0e36" stop-opacity="0"/></linearGradient><linearGradient id="gAOv" gradientUnits="userSpaceOnUse" x1="0" y1="345" x2="0" y2="560"><stop offset="0" stop-color="#fff" stop-opacity=".12"/><stop offset=".45" stop-color="#fff" stop-opacity=".6"/><stop offset="1" stop-color="#fff" stop-opacity="1"/></linearGradient><mask id="mAO" maskUnits="userSpaceOnUse" x="1500" y="330" width="240" height="420"><rect x="1500" y="330" width="240" height="420" fill="url(#gAOv)"/></mask><linearGradient id="gSh" gradientUnits="userSpaceOnUse" x1="709.0" y1="0.0" x2="905.0" y2="0.0"><stop offset="0.000" stop-color="#b6bac2"/><stop offset="0.550" stop-color="#bbbfc7"/><stop offset="1.000" stop-color="#c9ccd3"/></linearGradient><filter id="b5" x="-20%" y="-20%" width="140%" height="140%"><feGaussianBlur stdDeviation="5"/></filter></defs><rect x="709" y="203" width="1181" height="25" fill="#fafcfd"/><rect x="709" y="228" width="1181" height="772" fill="url(#bg)"/><g clip-path="url(#cv)"><polygon points="650,642.5 906,557.5 913,819.5 650,708" fill="url(#gSh)" filter="url(#b5)"/><polygon points="1700,740 1728,560 1800,650 1560,810 1200,960" fill="#c8c8e8" filter="url(#b12)" opacity=".22"/></g><polygon points="911,818 1148.5,965.6 1705,731.5 1700,700 1586.6,650 1300,700 1017,770" fill="url(#gF)" /><polygon points="903,479.4 1095.2,416.4 1114,411 1114,507 1017,541 1023.5,781.2 911,818" fill="url(#gL)" /><clipPath id="cL"><polygon points="903,479.4 1095.2,416.4 1114,411 1114,507 1017,541 1023.5,781.2 911,818"/></clipPath><g clip-path="url(#cL)"><polygon points="1098,418 1116,510 1018,544 1020,760 985,700 1000,560" fill="#3a2010" filter="url(#b8)" opacity=".2"/></g><polygon points="1300.5,347.6 1471.6,291.4 1473,292 1465.5,367 1400,360" fill="url(#gB1)" /><polygon points="1471.6,291.4 1586,341 1504.7,372 1464,367" fill="url(#gB2)" /><clipPath id="cB"><polygon points="1300.5,347.6 1471.6,291.4 1586,341 1504.7,372"/></clipPath><g clip-path="url(#cB)"><polygon points="1470,296 1490,368 1440,366" fill="#4a1a10" filter="url(#b4)" opacity=".35"/></g><polygon points="1114.5,414.7 1295,354.5 1297,355 1291.4,522.4 1133.4,505.5" fill="url(#gH1)" /><polygon points="1114.5,414.7 1295,354.5 1291.4,522.4 1133.4,505.5" fill="url(#gH1r)" /><polygon points="1295,354.5 1500,379.3 1496.5,482 1349.6,534.5 1289.4,522" fill="url(#gH2)" /><polygon points="1500,379.3 1534,468 1496.5,482" fill="url(#gH3)" /><clipPath id="cH"><polygon points="1114.5,414.7 1295,354.5 1500,379.3 1496.5,482 1349.6,534.5 1289.4,522 1133.4,505.5"/></clipPath><g clip-path="url(#cH)"><polygon points="1292,356 1302,356 1296,525 1284,525" fill="#3a1a10" filter="url(#b4)" opacity=".22"/></g><polygon points="1518.6,378.1 1601,349 1603,350 1588.6,671.6 1546,691 1553,464" fill="url(#gA)" /><polygon points="1518.6,378.1 1601,349 1586.6,670.6 1546,691 1553,464" fill="url(#gAO)" mask="url(#mAO)"/><polygon points="1601,349 1723,402.6 1705,731.5 1586.6,670.6" fill="url(#gR)" /><polygon points="1601,349 1723,402.6 1705,731.5 1586.6,670.6" fill="url(#gAOr)" mask="url(#mAO)"/><polygon points="1601,349 1723,402.6 1705,731.5 1586.6,670.6" fill="url(#gRb)" mask="url(#mR)"/><clipPath id="cR"><polygon points="1601,349 1723,402.6 1705,731.5 1586.6,670.6"/></clipPath><g clip-path="url(#cR)"><polygon points="1580,668 1712,736 1712,716 1590,650" fill="#1c0e36" filter="url(#b4)" opacity=".45"/></g><polygon points="1095.2,416.4 1300.5,347.6 1295,355.7 1114.5,414.9" fill="#fffff6" /><polygon points="1300.5,347.6 1504.7,371.6 1518.6,378.1 1500,379.3 1295,355.7" fill="url(#gSg)" /><polygon points="1504.7,371.6 1586,341 1601,349 1518.6,378.1" fill="#f1eeda" /><polygon points="1500,379.3 1518.6,378.1 1553,463.5 1534,468" fill="#f4f2e0" /><polygon points="1095.2,416.4 1114.5,414.9 1133.4,505.4 1113.6,507" fill="#fffffb" /><polygon points="1015.7,540.9 1113.6,507 1133.4,505 1128,515 1028.3,547" fill="#ffffff" /><polygon points="1133.4,505 1289.4,521.6 1349.6,533.9 1344,541.7 1127.9,515" fill="#ffffff" /><polygon points="1349.6,533.9 1534,467.7 1553,463.3 1553.6,464.7 1344,541.7" fill="url(#gSe)" /><polygon points="1026.3,546.4 1126.6,514.7 1129.5,514.9 1129.5,856.8 1033.5,890.8 1031.5,889.6" fill="url(#gS)" /><polygon points="1015.7,540.9 1028.3,547 1033.5,890.8 1023.7,884.5" fill="url(#gE)" /><polygon points="1126.6,514.7 1344,541.7 1346,541.2 1337.6,883 1335.6,883.6 1127.5,856.5" fill="url(#gY)" /><clipPath id="cY"><polygon points="1126.6,514.7 1344,541.7 1335.6,884 1127.5,857.5"/></clipPath><g clip-path="url(#cY)"><polygon points="1120,846 1255,850 1340,880 1340,900 1120,870" fill="#2a1858" filter="url(#b4)" opacity=".8"/></g><polygon points="1344,541.7 1553.6,464.7 1545.4,799 1335.6,887" fill="url(#gV)" /><path d="M754 955V933" stroke="#3f7fb5" stroke-width="1.6"/><path d="M754 929L751 936H757Z" fill="#3f7fb5"/><path d="M754 955L772 948.4" stroke="#d0305a" stroke-width="1.6"/><path d="M776 947L769.4 946.2L771 951.6Z" fill="#d0305a"/><path d="M754 955L738 946" stroke="#4a9a3a" stroke-width="1.6"/><path d="M734.4 944L738 949.6L741 944.6Z" fill="#4a9a3a"/></svg>
<div id="t112" class="t " style="left:721px;top:179px;letter-spacing:0.074px;font-size:12.6px;color:#333;">Graphics</div>
<div id="t113" class="t " style="left:799px;top:179px;letter-spacing:0.300px;font-size:12.6px;color:#2f6db5;">Temperature</div>
<svg style="left:881px;top:182px" width="9" height="9" viewBox="0 0 9 9"><path d="M.8 .8L8.2 8.2M8.2 .8L.8 8.2" stroke="#b0b0b0" stroke-width="1.1"/></svg>
<div class="abs" style="left:709px;top:202px;width:1180px;height:1px;background:#dcdfe4"></div>
<div class="abs" style="left:795px;top:200px;width:102px;height:2px;background:#2f7dc4"></div>
<svg style="left:1849px;top:183px" width="8" height="5" viewBox="0 0 8 5"><path d="M0 0H8L4 4.6Z" fill="#a9c4e2"/></svg>
<svg style="left:1862.5px;top:181px" width="9" height="8" viewBox="0 0 9 8"><rect x=".5" y=".5" width="8" height="7" fill="none" stroke="#a9c4e2" stroke-width="1"/><path d="M.5 1.2H8.5" stroke="#a9c4e2" stroke-width="1.4"/></svg>
<svg style="left:1878.5px;top:180px" width="7" height="11" viewBox="0 0 7 11"><path d="M1.4 .4H5.6V4.6L7 6.2H0L1.4 4.6Z" fill="#a9c4e2"/><path d="M3.5 6V10.6" stroke="#a9c4e2" stroke-width="1.1"/></svg>
<svg style="left:715.0px;top:206.0px" width="16" height="16" viewBox="0 0 16 16"><circle cx="6.4" cy="6.4" r="5" fill="#eaf3fc" stroke="#2f7dc4" stroke-width="1.5"/><path d="M10.2 10.2L15 15" stroke="#2f7dc4" stroke-width="2"/><path d="M3.8 6.4H9M6.4 3.8V9" stroke="#2f7dc4" stroke-width="1.4"/></svg>
<svg style="left:738.0px;top:206.0px" width="16" height="16" viewBox="0 0 16 16"><circle cx="6.4" cy="6.4" r="5" fill="#eaf3fc" stroke="#2f7dc4" stroke-width="1.5"/><path d="M10.2 10.2L15 15" stroke="#2f7dc4" stroke-width="2"/><path d="M3.8 6.4H9" stroke="#2f7dc4" stroke-width="1.4"/></svg>
<svg style="left:760.5px;top:206.0px" width="17" height="16" viewBox="0 0 17 16"><rect x=".6" y="5" width="9" height="9" fill="none" stroke="#2f7dc4" stroke-width="1" stroke-dasharray="2 1.4"/><circle cx="9" cy="6.4" r="4.6" fill="#eaf3fc" stroke="#2f7dc4" stroke-width="1.4"/><path d="M6.6 6.4H11.4M9 4V8.8" stroke="#2f7dc4" stroke-width="1.3"/><path d="M12.4 10L16 14.6" stroke="#2f7dc4" stroke-width="1.9"/></svg>
<svg style="left:783.5px;top:212.5px" width="7" height="4" viewBox="0 0 7 4"><path d="M0 0H7L3.5 4Z" fill="#222"/></svg>
<svg style="left:802.0px;top:206.0px" width="16" height="16" viewBox="0 0 16 16"><rect x=".6" y=".6" width="14.8" height="14.8" fill="#fbfcfe" stroke="#7a7a7a" stroke-width="1.1"/><path d="M8 5.6V10.4M5.6 8H10.4" stroke="#777" stroke-width="1.1"/><path d="M8 1.6L5.8 4.2H10.2ZM8 14.4L5.8 11.8H10.2ZM1.6 8L4.2 5.8V10.2ZM14.4 8L11.8 5.8V10.2Z" fill="#2f7dc4"/></svg>
<svg style="left:832.5px;top:207.0px" width="17" height="14" viewBox="0 0 17 14"><path d="M8 2V12" stroke="#3f7fb5" stroke-width="1.2"/><path d="M8 .6L6.2 3.6H9.8Z" fill="#3f7fb5"/><path d="M8 12L2 7.4" stroke="#4a9a3a" stroke-width="1.2"/><path d="M.8 6.4L4.2 7L2.4 9.2Z" fill="#4a9a3a"/><path d="M8 12L15 7.4" stroke="#d0305a" stroke-width="1.2"/><path d="M16.2 6.6L12.8 7L14.4 9.4Z" fill="#d0305a"/></svg>
<svg style="left:855.5px;top:212.5px" width="7" height="4" viewBox="0 0 7 4"><path d="M0 0H7L3.5 4Z" fill="#222"/></svg>
<svg style="left:875.0px;top:206.0px" width="16" height="16" viewBox="0 0 16 16"><path d="M2.4 2V13.6" stroke="#4a9a3a" stroke-width="1.1"/><path d="M2.4 13.6H14" stroke="#d0305a" stroke-width="1.1"/><path d="M2.4 .4L.8 3.2H4Z" fill="#4a9a3a"/><path d="M15.6 13.6L12.8 12V15.2Z" fill="#d0305a"/><text x="4.4" y="9" font-family="Liberation Sans,sans-serif" font-size="8.6" fill="#777">xy</text></svg>
<svg style="left:898.0px;top:206.0px" width="16" height="16" viewBox="0 0 16 16"><path d="M2.4 2V13.6" stroke="#3f7fb5" stroke-width="1.1"/><path d="M2.4 13.6H14" stroke="#4a9a3a" stroke-width="1.1"/><path d="M2.4 .4L.8 3.2H4Z" fill="#3f7fb5"/><path d="M15.6 13.6L12.8 12V15.2Z" fill="#4a9a3a"/><text x="4.4" y="9" font-family="Liberation Sans,sans-serif" font-size="8.6" fill="#777">yz</text></svg>
<svg style="left:921.0px;top:206.0px" width="16" height="16" viewBox="0 0 16 16"><path d="M2.4 2V13.6" stroke="#3f7fb5" stroke-width="1.1"/><path d="M2.4 13.6H14" stroke="#d0305a" stroke-width="1.1"/><path d="M2.4 .4L.8 3.2H4Z" fill="#3f7fb5"/><path d="M15.6 13.6L12.8 12V15.2Z" fill="#d0305a"/><text x="4.4" y="9" font-family="Liberation Sans,sans-serif" font-size="8.6" fill="#777">xz</text></svg>
<svg style="left:953.0px;top:206.5px" width="14" height="15" viewBox="0 0 14 15"><path d="M12.6 8.6A5.4 5.4 0 1 1 8.6 3.2" fill="none" stroke="#2f7dc4" stroke-width="1.6"/><path d="M7.6 .4L12 3.4L7.6 6.4Z" fill="#2f7dc4"/></svg>
<svg style="left:973.5px;top:212.5px" width="7" height="4" viewBox="0 0 7 4"><path d="M0 0H7L3.5 4Z" fill="#222"/></svg>
<div class="abs" style="left:826px;top:206px;width:1px;height:17px;background:#d5d9de"></div>
<div class="abs" style="left:944px;top:206px;width:1px;height:17px;background:#d5d9de"></div>
<div class="abs" style="left:992px;top:206px;width:1px;height:17px;background:#d5d9de"></div>
<div class="abs" style="left:1115px;top:206px;width:1px;height:17px;background:#d5d9de"></div>
<div class="abs" style="left:1146px;top:206px;width:1px;height:17px;background:#d5d9de"></div>
<div class="abs" style="left:1194px;top:206px;width:1px;height:17px;background:#d5d9de"></div>
<div class="abs" style="left:998.2px;top:204px;width:20px;height:20px;background:#cfe5f8;border:1px solid #a9cdee;border-radius:2px"></div>
<div class="abs" style="left:1067px;top:204px;width:20px;height:20px;background:#cfe5f8;border:1px solid #a9cdee;border-radius:2px"></div>
<svg style="left:1001.0px;top:206.0px" width="14" height="16" viewBox="0 0 14 16"><path d="M1 5.6H4.4L10.4 1.4V14.6L4.4 10.4H1Z" fill="#2f7dc4"/><path d="M12 5.4A3 3 0 0 1 12 10.6" fill="none" stroke="#2f7dc4" stroke-width="1.2"/></svg>
<svg style="left:1022.0px;top:206.0px" width="16" height="16" viewBox="0 0 16 16"><path d="M1 4.4L3.4 2H15V11.6L12.6 14H1Z" fill="#a9c9e8" stroke="#2f7dc4" stroke-width="1.1"/><rect x="1" y="4.4" width="11.6" height="9.6" fill="#dbe9f6" stroke="#2f7dc4" stroke-width="1.1"/></svg>
<svg style="left:1046.0px;top:206.0px" width="16" height="16" viewBox="0 0 16 16"><rect x=".6" y=".6" width="14.8" height="14.8" fill="#fff" stroke="#777" stroke-width="1.1"/><path d="M4 3V13M8 3V13M12 3V13M3 4H13M3 8H13M3 12H13" stroke="#3a6ea8" stroke-width="1"/></svg>
<svg style="left:1069.0px;top:206.0px" width="16" height="16" viewBox="0 0 16 16"><rect x=".6" y=".6" width="14.8" height="14.8" fill="#eaf3fc" stroke="#666" stroke-width="1"/><path d="M8 3V10L4 12.4M8 10L12.6 9" fill="none" stroke="#2f7dc4" stroke-width="1.2"/><path d="M8 10L4 12.4" stroke="#4a9a3a" stroke-width="1.3"/><path d="M8 10L12.6 9" stroke="#d0305a" stroke-width="1.3"/><path d="M8 2L6.4 4.6H9.6Z" fill="#2f7dc4"/></svg>
<svg style="left:1092.0px;top:206.0px" width="16" height="16" viewBox="0 0 16 16"><rect x=".6" y=".6" width="14.8" height="14.8" fill="#fff" stroke="#777" stroke-width="1.1"/><rect x="10.6" y="2.4" width="2.8" height="3.8" fill="#d03030"/><rect x="10.6" y="6.2" width="2.8" height="3.6" fill="#e8c030"/><rect x="10.6" y="9.8" width="2.8" height="3.8" fill="#3060c0"/></svg>
<svg style="left:1124.0px;top:206.5px" width="12" height="15" viewBox="0 0 12 15"><rect x="1" y="6" width="10" height="8.6" rx="1" fill="#2f7dc4"/><path d="M3 6V4A3 3 0 0 1 9 4V6" fill="none" stroke="#2f7dc4" stroke-width="1.6"/></svg>
<svg style="left:1153.0px;top:206.0px" width="16" height="16" viewBox="0 0 16 16"><path d="M8 1C3 1 1 5 1 8C1 12 4 15 7 15C9 15 8 12.6 9.6 12C12 11 15 11.4 15 7.6C15 3.4 12 1 8 1Z" fill="#ececec" stroke="#666" stroke-width="1.1"/><circle cx="5" cy="5.4" r="1.4" fill="#d03030"/><circle cx="9.4" cy="4" r="1.4" fill="#e8a030"/><circle cx="12" cy="7.4" r="1.4" fill="#3a8a3a"/><circle cx="4.4" cy="9.6" r="1.4" fill="#3060c0"/></svg>
<svg style="left:1174.5px;top:212.5px" width="7" height="4" viewBox="0 0 7 4"><path d="M0 0H7L3.5 4Z" fill="#222"/></svg>
<svg style="left:1202.0px;top:206.0px" width="16" height="16" viewBox="0 0 16 16"><circle cx="8" cy="8" r="6" fill="none" stroke="#2f7dc4" stroke-width="3.4" stroke-dasharray="5 1.3"/></svg>
<svg style="left:1223.5px;top:212.5px" width="7" height="4" viewBox="0 0 7 4"><path d="M0 0H7L3.5 4Z" fill="#222"/></svg>
<svg style="left:1242.0px;top:206.5px" width="16" height="15" viewBox="0 0 16 15"><path d="M1 4H4.6L6 2H10L11.4 4H15V13.6H1Z" fill="#2f7dc4"/><circle cx="8" cy="8.6" r="3" fill="none" stroke="#fff" stroke-width="1.3"/></svg>
<svg style="left:1266.0px;top:206.0px" width="16" height="16" viewBox="0 0 16 16"><rect x="3.6" y=".8" width="8.8" height="4.4" fill="#fff" stroke="#2f7dc4" stroke-width="1.3"/><rect x=".8" y="5" width="14.4" height="6.6" rx="1.2" fill="#cfe2f5" stroke="#2f7dc4" stroke-width="1.3"/><rect x="3.6" y="9.6" width="8.8" height="5.6" fill="#fff" stroke="#2f7dc4" stroke-width="1.3"/></svg>
<div id="t114" class="t gtxt" style="left:724px;top:241px;letter-spacing:-0.270px;">Load case 3</div>
<div id="t115" class="t gtxt" style="left:1142px;top:241px;letter-spacing:-0.149px;">Volume: Temperature (K)</div>
<div id="t116" class="t gtxt" style="left:1302px;top:241px;letter-spacing:-0.064px;">Surface: Temperature (K)</div>
<svg style="left:1868px;top:236px" width="15" height="13" viewBox="0 0 15 13"><path d="M1 2.4L13.6 .8L14.4 10.6L2 12.2Z" fill="#dfe6ee" stroke="#c4ccd6" stroke-width=".8"/><rect x="2.6" y="2.6" width="10" height="7.6" rx="1.4" fill="#244a8a"/><rect x="4.4" y="4" width="6" height="4.6" fill="#e9d44a"/></svg>
<div id="t117" class="t c gtxt" style="left:754px;top:913px;">z</div>
<div id="t118" class="t c gtxt" style="left:782.5px;top:935px;">x</div>
<div id="t119" class="t c gtxt" style="left:728.5px;top:933px;">y</div>
<div id="pr" class="t" style="left:1913.5px;top:176px;transform-origin:0 0;transform:rotate(90deg);font-size:12.4px;letter-spacing:-.45px;color:#2b5a9b">Progress</div>
<div id="lg" class="t" style="left:1913.5px;top:233.5px;transform-origin:0 0;transform:rotate(90deg);font-size:12.4px;color:#2b5a9b">Log</div>
<div id="t120" class="t " style="left:1240px;top:1008px;letter-spacing:-0.384px;font-size:11.6px;color:#222;">3.16 GB | 2.74 GB</div>
</body></html>
